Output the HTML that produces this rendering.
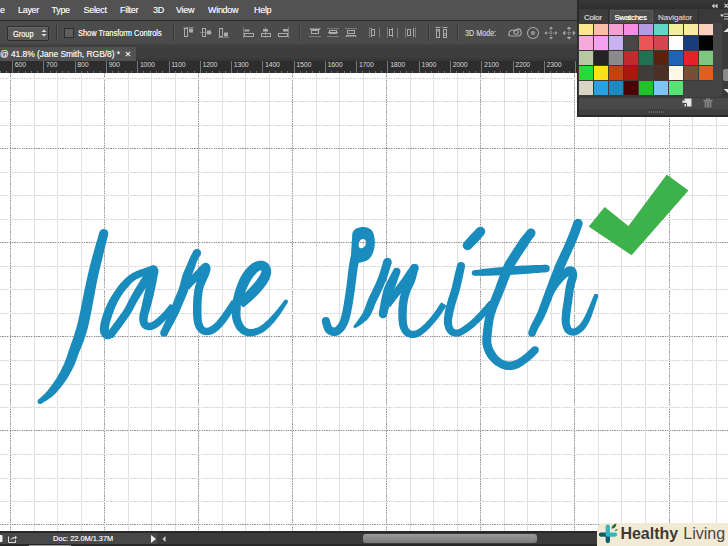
<!DOCTYPE html><html><head><meta charset="utf-8"><style>
*{margin:0;padding:0;box-sizing:border-box}
html,body{width:728px;height:546px;overflow:hidden;background:#fff;font-family:"Liberation Sans",sans-serif}
.a{position:absolute}
.t{position:absolute;white-space:nowrap;line-height:10px}
</style></head><body>
<div class="a" style="left:0;top:73px;width:728px;height:458px;background:#fff;overflow:hidden">
<div class="a" style="left:10.10px;top:0;width:1px;height:458px;background:repeating-linear-gradient(180deg,#969696 0 1.2px,#e2e2e2 1.2px 2.4px)"></div><div class="a" style="left:33.60px;top:0;width:1px;height:458px;background:#e0e0e0"></div><div class="a" style="left:57.10px;top:0;width:1px;height:458px;background:#e0e0e0"></div><div class="a" style="left:80.60px;top:0;width:1px;height:458px;background:#e0e0e0"></div><div class="a" style="left:104.16px;top:0;width:1px;height:458px;background:repeating-linear-gradient(180deg,#969696 0 1.2px,#e2e2e2 1.2px 2.4px)"></div><div class="a" style="left:127.66px;top:0;width:1px;height:458px;background:#e0e0e0"></div><div class="a" style="left:151.16px;top:0;width:1px;height:458px;background:#e0e0e0"></div><div class="a" style="left:174.66px;top:0;width:1px;height:458px;background:#e0e0e0"></div><div class="a" style="left:198.22px;top:0;width:1px;height:458px;background:repeating-linear-gradient(180deg,#969696 0 1.2px,#e2e2e2 1.2px 2.4px)"></div><div class="a" style="left:221.72px;top:0;width:1px;height:458px;background:#e0e0e0"></div><div class="a" style="left:245.22px;top:0;width:1px;height:458px;background:#e0e0e0"></div><div class="a" style="left:268.72px;top:0;width:1px;height:458px;background:#e0e0e0"></div><div class="a" style="left:292.28px;top:0;width:1px;height:458px;background:repeating-linear-gradient(180deg,#969696 0 1.2px,#e2e2e2 1.2px 2.4px)"></div><div class="a" style="left:315.78px;top:0;width:1px;height:458px;background:#e0e0e0"></div><div class="a" style="left:339.28px;top:0;width:1px;height:458px;background:#e0e0e0"></div><div class="a" style="left:362.78px;top:0;width:1px;height:458px;background:#e0e0e0"></div><div class="a" style="left:386.34px;top:0;width:1px;height:458px;background:repeating-linear-gradient(180deg,#969696 0 1.2px,#e2e2e2 1.2px 2.4px)"></div><div class="a" style="left:409.84px;top:0;width:1px;height:458px;background:#e0e0e0"></div><div class="a" style="left:433.34px;top:0;width:1px;height:458px;background:#e0e0e0"></div><div class="a" style="left:456.84px;top:0;width:1px;height:458px;background:#e0e0e0"></div><div class="a" style="left:480.40px;top:0;width:1px;height:458px;background:repeating-linear-gradient(180deg,#969696 0 1.2px,#e2e2e2 1.2px 2.4px)"></div><div class="a" style="left:503.90px;top:0;width:1px;height:458px;background:#e0e0e0"></div><div class="a" style="left:527.40px;top:0;width:1px;height:458px;background:#e0e0e0"></div><div class="a" style="left:550.90px;top:0;width:1px;height:458px;background:#e0e0e0"></div><div class="a" style="left:574.46px;top:0;width:1px;height:458px;background:repeating-linear-gradient(180deg,#969696 0 1.2px,#e2e2e2 1.2px 2.4px)"></div><div class="a" style="left:597.96px;top:0;width:1px;height:458px;background:#e0e0e0"></div><div class="a" style="left:621.46px;top:0;width:1px;height:458px;background:#e0e0e0"></div><div class="a" style="left:644.96px;top:0;width:1px;height:458px;background:#e0e0e0"></div><div class="a" style="left:668.52px;top:0;width:1px;height:458px;background:repeating-linear-gradient(180deg,#969696 0 1.2px,#e2e2e2 1.2px 2.4px)"></div><div class="a" style="left:692.02px;top:0;width:1px;height:458px;background:#e0e0e0"></div><div class="a" style="left:715.52px;top:0;width:1px;height:458px;background:#e0e0e0"></div><div class="a" style="left:0;top:5.25px;width:728px;height:1px;background:repeating-linear-gradient(90deg,#d4d4d4 0 1.2px,#f0f0f0 1.2px 2.4px)"></div><div class="a" style="left:0;top:28.35px;width:728px;height:1px;background:repeating-linear-gradient(90deg,#d4d4d4 0 1.2px,#f0f0f0 1.2px 2.4px)"></div><div class="a" style="left:0;top:51.85px;width:728px;height:1px;background:repeating-linear-gradient(90deg,#d4d4d4 0 1.2px,#f0f0f0 1.2px 2.4px)"></div><div class="a" style="left:0;top:75.10px;width:728px;height:1px;background:repeating-linear-gradient(90deg,#969696 0 1.2px,#e2e2e2 1.2px 2.4px)"></div><div class="a" style="left:0;top:99.30px;width:728px;height:1px;background:repeating-linear-gradient(90deg,#d4d4d4 0 1.2px,#f0f0f0 1.2px 2.4px)"></div><div class="a" style="left:0;top:122.40px;width:728px;height:1px;background:repeating-linear-gradient(90deg,#d4d4d4 0 1.2px,#f0f0f0 1.2px 2.4px)"></div><div class="a" style="left:0;top:145.90px;width:728px;height:1px;background:repeating-linear-gradient(90deg,#d4d4d4 0 1.2px,#f0f0f0 1.2px 2.4px)"></div><div class="a" style="left:0;top:169.15px;width:728px;height:1px;background:repeating-linear-gradient(90deg,#969696 0 1.2px,#e2e2e2 1.2px 2.4px)"></div><div class="a" style="left:0;top:193.35px;width:728px;height:1px;background:repeating-linear-gradient(90deg,#d4d4d4 0 1.2px,#f0f0f0 1.2px 2.4px)"></div><div class="a" style="left:0;top:216.45px;width:728px;height:1px;background:repeating-linear-gradient(90deg,#d4d4d4 0 1.2px,#f0f0f0 1.2px 2.4px)"></div><div class="a" style="left:0;top:239.95px;width:728px;height:1px;background:repeating-linear-gradient(90deg,#d4d4d4 0 1.2px,#f0f0f0 1.2px 2.4px)"></div><div class="a" style="left:0;top:263.20px;width:728px;height:1px;background:repeating-linear-gradient(90deg,#969696 0 1.2px,#e2e2e2 1.2px 2.4px)"></div><div class="a" style="left:0;top:287.40px;width:728px;height:1px;background:repeating-linear-gradient(90deg,#d4d4d4 0 1.2px,#f0f0f0 1.2px 2.4px)"></div><div class="a" style="left:0;top:310.50px;width:728px;height:1px;background:repeating-linear-gradient(90deg,#d4d4d4 0 1.2px,#f0f0f0 1.2px 2.4px)"></div><div class="a" style="left:0;top:334.00px;width:728px;height:1px;background:repeating-linear-gradient(90deg,#d4d4d4 0 1.2px,#f0f0f0 1.2px 2.4px)"></div><div class="a" style="left:0;top:357.25px;width:728px;height:1px;background:repeating-linear-gradient(90deg,#969696 0 1.2px,#e2e2e2 1.2px 2.4px)"></div><div class="a" style="left:0;top:381.45px;width:728px;height:1px;background:repeating-linear-gradient(90deg,#d4d4d4 0 1.2px,#f0f0f0 1.2px 2.4px)"></div><div class="a" style="left:0;top:404.55px;width:728px;height:1px;background:repeating-linear-gradient(90deg,#d4d4d4 0 1.2px,#f0f0f0 1.2px 2.4px)"></div><div class="a" style="left:0;top:428.05px;width:728px;height:1px;background:repeating-linear-gradient(90deg,#d4d4d4 0 1.2px,#f0f0f0 1.2px 2.4px)"></div><div class="a" style="left:0;top:451.30px;width:728px;height:1px;background:repeating-linear-gradient(90deg,#969696 0 1.2px,#e2e2e2 1.2px 2.4px)"></div>
</div>
<svg class="a" style="left:0;top:0" width="728" height="546" viewBox="0 0 728 546"><path fill="#1a8bbd" d="M99.5 232.3 L99.0 233.9 L98.3 236.1 L97.6 238.6 L96.7 241.4 L95.8 244.5 L94.9 247.6 L94.0 250.7 L93.2 253.8 L92.4 256.6 L91.6 259.4 L90.9 262.2 L90.1 265.1 L89.4 268.2 L88.6 271.4 L87.8 275.0 L86.9 278.9 L85.9 283.4 L84.8 288.5 L83.7 293.9 L82.6 299.5 L81.5 305.0 L80.5 310.2 L79.5 314.9 L78.6 318.8 L77.9 322.0 L77.3 324.5 L76.7 326.6 L76.2 328.4 L75.7 330.0 L75.2 331.5 L74.7 333.1 L74.2 334.9 L73.6 336.7 L73.1 338.3 L72.5 339.9 L72.0 341.4 L71.4 343.0 L70.8 344.6 L70.2 346.4 L69.6 348.2 L68.9 350.1 L68.2 352.1 L67.6 354.2 L66.9 356.2 L66.2 358.2 L65.5 360.1 L64.7 362.1 L64.0 363.9 L63.1 365.7 L62.2 367.6 L61.3 369.5 L60.3 371.4 L59.3 373.2 L58.3 375.0 L57.3 376.8 L56.3 378.5 L55.2 380.2 L54.1 381.8 L53.0 383.5 L51.8 385.1 L50.7 386.6 L49.5 388.1 L48.4 389.5 L47.3 390.9 L46.2 392.1 L45.1 393.4 L43.8 394.6 L42.5 395.8 L41.3 396.9 L40.2 398.0 L39.2 398.8 L38.5 399.5 L41.5 403.5 L41.5 403.5 L42.3 403.0 L43.4 402.4 L44.7 401.6 L46.2 400.7 L47.8 399.7 L49.5 398.6 L51.1 397.4 L52.7 396.1 L54.1 394.8 L55.5 393.4 L56.9 391.9 L58.4 390.3 L59.7 388.7 L61.1 387.0 L62.4 385.3 L63.7 383.5 L65.0 381.7 L66.2 379.9 L67.5 378.0 L68.7 376.1 L69.8 374.1 L70.9 372.1 L72.0 370.1 L73.0 368.1 L74.0 366.0 L74.9 363.9 L75.8 361.7 L76.6 359.6 L77.3 357.5 L78.0 355.5 L78.7 353.6 L79.4 351.8 L80.1 350.1 L80.8 348.4 L81.4 346.8 L82.1 345.2 L82.7 343.6 L83.4 341.9 L84.0 340.2 L84.6 338.3 L85.2 336.5 L85.7 334.9 L86.3 333.3 L86.8 331.5 L87.4 329.5 L88.0 327.2 L88.6 324.5 L89.4 321.2 L90.2 317.1 L91.2 312.4 L92.2 307.1 L93.2 301.6 L94.3 296.0 L95.3 290.5 L96.2 285.5 L97.1 281.1 L97.9 277.3 L98.7 273.8 L99.4 270.6 L100.1 267.6 L100.8 264.7 L101.5 261.9 L102.2 259.1 L102.8 256.2 L103.6 253.2 L104.3 250.1 L105.1 247.0 L105.8 243.9 L106.6 241.1 L107.2 238.5 L107.7 236.3 L108.1 234.7Z"/><circle fill="#1a8bbd" cx="103.8" cy="233.5" r="4.50"/><circle fill="#1a8bbd" cx="40.0" cy="401.5" r="2.50"/><path fill="#1a8bbd" d="M152.4 265.4 L151.8 265.6 L151.1 265.8 L150.2 266.2 L149.2 266.5 L148.1 266.9 L147.0 267.3 L145.9 267.7 L144.9 268.0 L143.9 268.4 L142.9 268.7 L141.8 269.1 L140.7 269.4 L139.7 269.8 L138.6 270.2 L137.5 270.6 L136.5 271.1 L135.5 271.5 L134.5 272.0 L133.6 272.5 L132.6 273.0 L131.6 273.6 L130.7 274.2 L129.7 274.8 L128.7 275.5 L127.7 276.3 L126.7 277.2 L125.8 278.0 L124.8 278.9 L123.9 279.8 L123.1 280.7 L122.3 281.5 L121.5 282.3 L120.8 283.1 L120.2 283.8 L119.6 284.5 L119.0 285.2 L118.4 286.0 L117.8 286.8 L117.1 287.7 L116.4 288.8 L115.6 289.9 L114.7 291.2 L113.8 292.6 L112.8 294.0 L111.9 295.5 L111.0 297.0 L110.1 298.6 L109.2 300.0 L108.5 301.5 L107.7 302.9 L107.0 304.4 L106.4 305.8 L105.8 307.2 L105.2 308.6 L104.6 310.1 L104.1 311.5 L103.5 312.9 L103.0 314.4 L102.5 315.9 L102.1 317.4 L101.6 318.9 L101.2 320.4 L100.9 321.8 L100.6 323.1 L100.4 324.3 L100.2 325.4 L100.0 326.5 L99.9 327.6 L99.8 328.7 L99.8 329.7 L99.9 330.8 L100.1 331.8 L100.3 332.9 L100.7 333.9 L101.2 334.9 L101.8 335.8 L102.4 336.7 L103.2 337.5 L104.1 338.2 L105.4 338.9 L107.1 339.3 L108.6 339.2 L109.7 338.9 L110.6 338.6 L111.3 338.3 L111.8 338.0 L112.2 337.9 L112.3 337.8 L109.7 330.2 L109.7 330.2 L109.2 330.4 L108.6 330.6 L108.2 330.8 L107.7 330.9 L107.4 331.0 L107.4 330.9 L107.8 330.9 L108.6 331.1 L109.1 331.3 L109.2 331.3 L109.2 331.3 L109.2 331.2 L109.1 331.0 L109.0 330.7 L109.0 330.4 L108.9 330.2 L108.9 329.8 L108.9 329.4 L108.9 328.9 L108.9 328.3 L109.0 327.6 L109.1 326.8 L109.2 325.9 L109.4 324.9 L109.6 323.9 L110.0 322.7 L110.3 321.4 L110.7 320.1 L111.1 318.7 L111.6 317.3 L112.1 315.9 L112.5 314.5 L113.0 313.2 L113.5 311.9 L114.0 310.5 L114.5 309.2 L115.0 307.9 L115.6 306.6 L116.2 305.3 L116.8 304.0 L117.4 302.6 L118.2 301.2 L119.0 299.8 L119.8 298.3 L120.7 296.9 L121.5 295.6 L122.3 294.4 L123.0 293.2 L123.6 292.3 L124.2 291.5 L124.7 290.9 L125.2 290.3 L125.7 289.7 L126.2 289.1 L126.8 288.4 L127.5 287.7 L128.2 286.9 L128.9 286.0 L129.6 285.2 L130.4 284.3 L131.1 283.5 L131.9 282.7 L132.6 282.1 L133.3 281.5 L134.0 280.9 L134.7 280.4 L135.5 280.0 L136.2 279.5 L137.0 279.1 L137.8 278.7 L138.7 278.3 L139.5 277.9 L140.4 277.5 L141.3 277.2 L142.2 276.8 L143.2 276.4 L144.2 276.1 L145.2 275.8 L146.2 275.5 L147.1 275.2 L148.1 274.9 L149.2 274.7 L150.2 274.4 L151.3 274.2 L152.3 274.0 L153.2 273.9 L154.0 273.7 L154.6 273.6Z"/><circle fill="#1a8bbd" cx="153.5" cy="269.5" r="4.25"/><circle fill="#1a8bbd" cx="111.0" cy="334.0" r="4.00"/><path fill="#1a8bbd" d="M114.2 336.4 L114.6 335.8 L115.2 335.1 L115.8 334.3 L116.6 333.3 L117.4 332.2 L118.3 331.0 L119.2 329.7 L120.2 328.4 L121.3 326.9 L122.5 325.3 L123.8 323.5 L125.2 321.6 L126.6 319.7 L127.9 317.8 L129.2 315.9 L130.4 314.1 L131.4 312.4 L132.4 310.8 L133.2 309.2 L134.0 307.6 L134.8 306.1 L135.5 304.7 L136.2 303.3 L137.0 302.0 L137.8 300.6 L138.6 299.2 L139.4 297.9 L140.3 296.5 L141.1 295.2 L141.9 293.9 L142.8 292.6 L143.6 291.2 L144.5 289.8 L145.4 288.4 L146.3 287.0 L147.1 285.6 L148.0 284.2 L148.9 282.9 L149.7 281.6 L150.5 280.4 L151.3 279.3 L152.1 278.1 L153.0 277.0 L153.8 275.9 L154.6 274.9 L155.3 274.0 L155.9 273.2 L156.4 272.6 L149.6 267.4 L149.6 267.4 L149.2 268.0 L148.6 268.8 L147.9 269.7 L147.1 270.7 L146.2 271.9 L145.3 273.1 L144.4 274.3 L143.5 275.6 L142.6 276.9 L141.7 278.2 L140.8 279.6 L139.9 281.0 L139.0 282.5 L138.1 283.9 L137.2 285.4 L136.4 286.8 L135.6 288.2 L134.7 289.6 L134.0 290.9 L133.2 292.3 L132.4 293.7 L131.6 295.2 L130.8 296.6 L130.0 298.0 L129.2 299.6 L128.4 301.1 L127.7 302.5 L126.9 304.0 L126.2 305.4 L125.4 306.9 L124.5 308.4 L123.6 309.9 L122.6 311.5 L121.4 313.2 L120.1 315.0 L118.7 316.9 L117.4 318.7 L116.1 320.5 L114.9 322.2 L113.8 323.6 L112.8 325.0 L111.9 326.2 L111.0 327.4 L110.2 328.5 L109.5 329.4 L108.8 330.3 L108.2 331.0 L107.8 331.6Z"/><circle fill="#1a8bbd" cx="111.0" cy="334.0" r="4.00"/><circle fill="#1a8bbd" cx="153.0" cy="270.0" r="4.25"/><path fill="#1a8bbd" d="M149.6 270.1 L149.3 271.6 L148.8 273.5 L148.3 275.9 L147.7 278.5 L147.1 281.2 L146.5 284.0 L145.9 286.6 L145.4 289.0 L144.9 291.2 L144.4 293.5 L143.9 295.8 L143.4 298.0 L142.9 300.2 L142.4 302.2 L142.0 304.2 L141.6 305.9 L141.3 307.5 L140.9 308.8 L140.6 310.2 L140.2 311.4 L139.9 312.7 L139.6 313.9 L139.4 315.3 L139.3 316.6 L139.2 317.9 L139.2 319.1 L139.3 320.3 L139.4 321.5 L139.7 322.7 L140.0 323.9 L140.5 325.0 L141.1 326.1 L141.9 327.2 L142.8 328.0 L143.8 328.7 L144.9 329.3 L146.0 329.8 L147.2 330.1 L148.4 330.2 L149.6 330.2 L150.8 330.1 L152.0 329.9 L153.1 329.5 L154.3 329.1 L155.4 328.6 L156.5 328.0 L157.6 327.3 L158.7 326.5 L159.8 325.7 L160.9 324.7 L162.1 323.6 L163.2 322.5 L164.3 321.4 L165.4 320.2 L166.5 319.0 L167.6 317.9 L168.7 316.6 L169.9 315.3 L171.1 313.9 L172.2 312.5 L173.3 311.1 L174.3 309.9 L175.1 309.0 L175.7 308.2 L170.3 303.8 L170.3 303.8 L169.7 304.5 L168.9 305.5 L167.9 306.7 L166.8 308.0 L165.7 309.4 L164.6 310.7 L163.5 312.0 L162.4 313.1 L161.4 314.2 L160.3 315.2 L159.2 316.3 L158.2 317.3 L157.1 318.2 L156.1 319.1 L155.2 319.8 L154.3 320.5 L153.5 321.0 L152.7 321.5 L152.0 321.9 L151.3 322.2 L150.7 322.5 L150.1 322.6 L149.7 322.7 L149.4 322.8 L149.1 322.7 L148.8 322.7 L148.6 322.6 L148.4 322.4 L148.2 322.3 L148.0 322.1 L147.9 322.0 L147.9 321.9 L147.8 321.7 L147.8 321.4 L147.7 321.0 L147.6 320.4 L147.6 319.8 L147.6 319.0 L147.6 318.2 L147.7 317.4 L147.9 316.6 L148.1 315.8 L148.3 314.9 L148.6 313.8 L149.0 312.6 L149.5 311.3 L149.9 309.8 L150.4 308.1 L150.8 306.3 L151.3 304.4 L151.9 302.3 L152.4 300.1 L153.0 297.9 L153.6 295.6 L154.1 293.3 L154.6 291.0 L155.2 288.6 L155.7 285.9 L156.3 283.1 L156.8 280.4 L157.3 277.8 L157.7 275.4 L158.1 273.4 L158.4 271.9Z"/><circle fill="#1a8bbd" cx="154.0" cy="271.0" r="4.50"/><path fill="#1a8bbd" d="M193.5 251.0 L193.3 251.4 L193.0 251.9 L192.6 252.6 L192.2 253.3 L191.7 254.2 L191.2 255.1 L190.7 256.1 L190.2 257.1 L189.7 258.2 L189.2 259.3 L188.7 260.4 L188.2 261.6 L187.7 262.8 L187.3 263.9 L186.8 265.1 L186.3 266.1 L185.9 267.2 L185.5 268.1 L185.0 269.2 L184.5 270.2 L184.0 271.3 L183.5 272.5 L183.0 273.8 L182.5 275.3 L182.0 276.8 L181.6 278.5 L181.1 280.1 L180.7 281.8 L180.3 283.4 L179.9 285.0 L179.4 286.5 L179.0 287.9 L178.5 289.3 L178.0 290.7 L177.4 292.0 L176.9 293.4 L176.3 294.8 L175.6 296.2 L175.0 297.7 L174.4 299.2 L173.8 300.7 L173.2 302.2 L172.7 303.7 L172.1 305.1 L171.5 306.6 L170.9 308.1 L170.3 309.6 L169.7 311.1 L169.0 312.7 L168.3 314.4 L167.5 316.2 L166.7 317.9 L166.0 319.7 L165.2 321.3 L164.5 322.9 L163.9 324.2 L163.4 325.5 L162.8 326.6 L162.4 327.6 L161.9 328.6 L161.5 329.4 L161.2 330.2 L160.9 330.8 L160.6 331.3 L167.4 334.7 L167.4 334.7 L167.6 334.2 L167.9 333.6 L168.3 332.9 L168.8 332.0 L169.3 331.1 L169.9 330.1 L170.5 329.0 L171.1 327.8 L171.8 326.4 L172.6 325.0 L173.5 323.4 L174.4 321.7 L175.3 320.0 L176.2 318.2 L177.1 316.5 L177.9 314.9 L178.7 313.3 L179.4 311.7 L180.1 310.2 L180.7 308.7 L181.3 307.2 L182.0 305.7 L182.6 304.3 L183.2 302.8 L183.8 301.4 L184.4 300.0 L185.0 298.6 L185.7 297.1 L186.3 295.6 L186.9 294.1 L187.5 292.5 L188.0 290.9 L188.5 289.1 L189.0 287.4 L189.4 285.6 L189.7 283.9 L190.1 282.2 L190.4 280.7 L190.8 279.2 L191.1 277.9 L191.5 276.8 L191.8 275.7 L192.2 274.6 L192.6 273.6 L193.0 272.6 L193.4 271.5 L193.8 270.4 L194.3 269.3 L194.7 268.1 L195.1 266.9 L195.5 265.7 L195.9 264.5 L196.3 263.4 L196.7 262.3 L197.1 261.3 L197.4 260.5 L197.8 259.7 L198.2 258.9 L198.6 258.1 L199.1 257.3 L199.5 256.6 L199.9 256.0 L200.2 255.4 L200.5 255.0Z"/><circle fill="#1a8bbd" cx="197.0" cy="253.0" r="4.00"/><circle fill="#1a8bbd" cx="164.0" cy="333.0" r="3.75"/><path fill="#1a8bbd" d="M189.0 289.6 L189.3 289.3 L189.7 288.8 L190.2 288.3 L190.8 287.6 L191.3 287.0 L191.9 286.4 L192.4 285.8 L192.9 285.2 L193.4 284.8 L193.8 284.3 L194.3 283.8 L194.7 283.4 L195.2 282.9 L195.7 282.4 L196.3 281.9 L196.8 281.3 L197.4 280.8 L198.0 280.2 L198.7 279.5 L199.3 278.9 L200.0 278.2 L200.6 277.6 L201.3 276.9 L201.9 276.2 L202.5 275.6 L203.1 274.9 L203.7 274.3 L204.2 273.7 L204.7 273.1 L205.1 272.6 L205.5 272.2 L205.8 271.8 L206.2 271.4 L206.6 271.1 L206.9 270.8 L207.2 270.5 L207.3 270.4 L207.3 270.4 L206.9 270.6 L205.8 270.8 L204.2 270.4 L203.2 269.6 L202.7 269.0 L202.6 268.6 L202.6 268.4 L202.6 268.4 L202.5 268.4 L202.5 268.5 L202.5 268.6 L202.4 268.9 L202.3 269.2 L202.1 269.7 L201.8 270.2 L201.6 270.7 L201.3 271.3 L201.1 271.9 L200.8 272.5 L200.6 273.0 L200.3 273.7 L200.0 274.3 L199.6 275.0 L199.3 275.8 L198.9 276.5 L198.6 277.3 L198.3 278.0 L198.0 278.7 L197.6 279.5 L197.3 280.3 L196.9 281.1 L196.6 281.9 L196.3 282.8 L196.0 283.6 L195.7 284.4 L195.5 285.2 L195.2 286.0 L195.0 286.8 L194.8 287.6 L194.7 288.4 L194.5 289.3 L194.3 290.3 L194.1 291.3 L194.0 292.3 L193.8 293.4 L193.7 294.5 L193.6 295.7 L193.4 297.0 L193.3 298.3 L193.3 299.8 L193.2 301.3 L193.1 303.0 L193.0 304.7 L193.0 306.6 L193.0 308.4 L193.0 310.2 L193.0 312.0 L193.1 313.6 L193.1 315.2 L193.2 316.6 L193.3 318.1 L193.5 319.6 L193.7 321.0 L193.9 322.4 L194.3 323.9 L194.7 325.2 L195.2 326.5 L195.7 327.7 L196.4 328.9 L197.1 330.0 L197.9 331.1 L198.9 332.1 L200.0 333.1 L201.2 333.8 L202.5 334.4 L203.8 334.8 L205.1 335.0 L206.5 335.2 L208.0 335.1 L209.5 334.9 L211.1 334.5 L212.6 333.9 L213.9 333.2 L215.3 332.4 L216.7 331.5 L218.0 330.4 L219.4 329.2 L220.9 327.8 L222.3 326.2 L223.9 324.4 L225.6 322.2 L227.6 319.5 L229.7 316.6 L231.7 313.6 L233.7 310.6 L235.5 307.9 L237.0 305.7 L238.1 304.1 L231.9 299.9 L231.9 299.9 L230.8 301.5 L229.3 303.8 L227.5 306.4 L225.5 309.4 L223.5 312.3 L221.5 315.2 L219.7 317.6 L218.1 319.6 L216.8 321.2 L215.5 322.5 L214.3 323.7 L213.2 324.6 L212.2 325.4 L211.2 326.1 L210.3 326.6 L209.4 327.1 L208.7 327.4 L208.0 327.6 L207.4 327.7 L206.8 327.7 L206.2 327.7 L205.7 327.5 L205.2 327.4 L204.8 327.2 L204.5 327.0 L204.2 326.7 L203.9 326.3 L203.5 325.8 L203.2 325.1 L202.9 324.4 L202.6 323.6 L202.3 322.8 L202.1 321.9 L201.9 321.0 L201.8 320.0 L201.7 318.8 L201.7 317.6 L201.6 316.2 L201.6 314.8 L201.5 313.4 L201.5 311.8 L201.5 310.2 L201.5 308.5 L201.5 306.7 L201.6 305.0 L201.6 303.3 L201.7 301.7 L201.7 300.2 L201.8 298.9 L201.9 297.7 L202.0 296.6 L202.1 295.5 L202.3 294.5 L202.4 293.5 L202.5 292.6 L202.7 291.7 L202.8 290.9 L203.0 290.1 L203.1 289.5 L203.3 288.9 L203.4 288.3 L203.6 287.7 L203.8 287.0 L204.0 286.4 L204.3 285.7 L204.5 285.0 L204.8 284.4 L205.1 283.7 L205.4 282.9 L205.7 282.2 L206.1 281.4 L206.4 280.7 L206.7 280.0 L207.0 279.4 L207.3 278.7 L207.7 278.0 L208.0 277.3 L208.3 276.5 L208.7 275.8 L208.9 275.1 L209.2 274.4 L209.4 273.8 L209.6 273.1 L209.8 272.4 L210.0 271.7 L210.2 271.0 L210.4 270.3 L210.5 269.5 L210.5 268.7 L210.5 268.0 L210.4 267.2 L210.2 266.4 L209.9 265.4 L209.2 264.4 L207.8 263.3 L205.8 262.8 L204.2 263.1 L203.3 263.5 L202.6 264.0 L202.0 264.4 L201.5 264.9 L201.1 265.3 L200.6 265.7 L200.2 266.2 L199.6 266.7 L199.1 267.3 L198.6 267.9 L198.1 268.5 L197.6 269.1 L197.1 269.7 L196.6 270.2 L196.1 270.8 L195.5 271.3 L195.0 271.9 L194.3 272.5 L193.7 273.2 L193.0 273.8 L192.4 274.5 L191.8 275.1 L191.2 275.7 L190.6 276.2 L190.1 276.7 L189.6 277.2 L189.1 277.7 L188.6 278.2 L188.1 278.7 L187.6 279.2 L187.1 279.8 L186.5 280.4 L185.9 281.0 L185.3 281.7 L184.7 282.4 L184.2 283.0 L183.7 283.5 L183.3 284.0 L183.0 284.4Z"/><path fill="#1a8bbd" d="M241.6 304.2 L241.8 303.3 L242.2 302.2 L242.5 300.9 L242.9 299.4 L243.4 297.9 L243.8 296.4 L244.3 294.9 L244.7 293.6 L245.2 292.3 L245.8 290.9 L246.3 289.6 L246.9 288.3 L247.4 287.0 L248.0 285.7 L248.6 284.5 L249.2 283.4 L249.8 282.3 L250.4 281.3 L251.0 280.3 L251.6 279.3 L252.2 278.3 L252.8 277.5 L253.4 276.6 L254.1 275.8 L254.7 275.1 L255.3 274.4 L255.9 273.7 L256.5 273.1 L257.0 272.5 L257.6 272.0 L258.1 271.6 L258.5 271.3 L258.9 271.1 L259.4 270.8 L259.8 270.6 L260.3 270.5 L260.7 270.4 L261.1 270.3 L261.4 270.2 L261.5 270.2 L261.5 270.2 L261.4 270.2 L261.3 270.1 L261.3 270.1 L261.3 270.1 L261.3 270.1 L261.3 270.1 L261.3 270.2 L261.3 270.3 L261.4 270.5 L261.4 270.7 L261.4 271.0 L261.4 271.3 L261.3 271.6 L261.3 271.9 L261.2 272.3 L261.0 272.8 L260.7 273.4 L260.3 274.2 L259.9 275.0 L259.4 275.9 L258.8 276.8 L258.2 277.7 L257.6 278.6 L257.0 279.5 L256.3 280.4 L255.5 281.4 L254.7 282.4 L253.8 283.4 L252.9 284.4 L252.0 285.4 L251.1 286.5 L250.2 287.5 L249.3 288.5 L248.3 289.5 L247.4 290.5 L246.4 291.5 L245.4 292.5 L244.5 293.4 L243.6 294.3 L242.7 295.2 L241.8 296.1 L240.8 296.9 L239.9 297.8 L239.0 298.6 L238.2 299.3 L237.5 299.9 L236.9 300.4 L243.1 307.6 L243.1 307.6 L243.6 307.2 L244.3 306.7 L245.2 306.0 L246.1 305.2 L247.2 304.4 L248.3 303.5 L249.3 302.6 L250.4 301.7 L251.4 300.8 L252.5 299.8 L253.5 298.8 L254.6 297.8 L255.7 296.8 L256.8 295.7 L257.9 294.6 L258.9 293.5 L259.9 292.5 L260.8 291.4 L261.8 290.3 L262.8 289.1 L263.7 288.0 L264.7 286.8 L265.5 285.6 L266.4 284.4 L267.1 283.2 L267.8 282.1 L268.5 280.8 L269.1 279.6 L269.6 278.4 L270.1 277.2 L270.5 276.0 L270.8 274.7 L271.1 273.5 L271.2 272.2 L271.2 271.0 L271.0 269.8 L270.8 268.7 L270.5 267.7 L270.2 266.8 L269.7 265.8 L269.2 264.9 L268.5 264.0 L267.8 263.2 L266.9 262.5 L265.9 261.9 L264.8 261.4 L263.7 261.0 L262.5 260.8 L261.4 260.7 L260.3 260.7 L259.1 260.8 L258.0 261.0 L256.9 261.3 L255.8 261.7 L254.6 262.1 L253.5 262.7 L252.4 263.3 L251.4 264.0 L250.4 264.7 L249.5 265.5 L248.5 266.4 L247.7 267.3 L246.8 268.2 L245.9 269.2 L245.1 270.2 L244.3 271.3 L243.5 272.4 L242.7 273.5 L242.0 274.7 L241.2 276.0 L240.5 277.3 L239.8 278.6 L239.2 280.0 L238.5 281.4 L237.9 282.9 L237.3 284.4 L236.8 285.9 L236.2 287.4 L235.7 288.9 L235.3 290.4 L234.8 292.0 L234.3 293.7 L233.9 295.3 L233.5 297.0 L233.2 298.5 L232.9 299.9 L232.6 301.0 L232.4 301.8Z"/><path fill="#1a8bbd" d="M232.8 299.7 L232.7 300.3 L232.7 301.1 L232.6 302.0 L232.5 303.1 L232.4 304.2 L232.4 305.4 L232.3 306.7 L232.3 307.8 L232.2 308.9 L232.1 310.1 L232.0 311.4 L232.0 312.7 L231.9 314.2 L231.9 315.7 L232.1 317.3 L232.3 318.8 L232.7 320.3 L233.1 321.7 L233.6 323.2 L234.2 324.6 L234.9 326.0 L235.6 327.4 L236.4 328.7 L237.3 330.0 L238.3 331.1 L239.4 332.1 L240.5 333.0 L241.7 333.9 L243.0 334.6 L244.3 335.3 L245.8 335.8 L247.3 336.2 L248.8 336.4 L250.4 336.4 L252.0 336.3 L253.5 336.0 L255.0 335.7 L256.5 335.3 L257.9 334.8 L259.3 334.3 L260.6 333.6 L261.9 333.0 L263.2 332.2 L264.4 331.4 L265.6 330.5 L266.8 329.6 L268.0 328.5 L269.2 327.4 L270.4 326.2 L271.7 324.8 L273.0 323.4 L274.3 321.9 L275.5 320.4 L276.8 318.8 L278.0 317.3 L279.1 315.7 L280.4 314.0 L281.6 312.2 L282.8 310.3 L284.0 308.4 L285.2 306.6 L286.2 305.0 L287.0 303.7 L287.6 302.7 L284.4 300.3 L284.4 300.3 L283.6 301.3 L282.6 302.6 L281.5 304.1 L280.2 305.7 L278.8 307.4 L277.5 309.2 L276.1 310.8 L274.9 312.3 L273.6 313.7 L272.3 315.1 L271.0 316.5 L269.7 317.9 L268.5 319.2 L267.2 320.4 L266.0 321.6 L264.8 322.6 L263.7 323.5 L262.6 324.4 L261.6 325.1 L260.6 325.8 L259.6 326.4 L258.7 326.9 L257.7 327.4 L256.7 327.7 L255.6 328.1 L254.5 328.4 L253.4 328.7 L252.3 328.9 L251.3 329.0 L250.3 329.0 L249.4 328.9 L248.7 328.8 L248.1 328.6 L247.4 328.3 L246.7 328.0 L246.1 327.5 L245.4 327.0 L244.8 326.4 L244.2 325.7 L243.7 325.0 L243.2 324.3 L242.7 323.5 L242.3 322.5 L241.9 321.5 L241.5 320.4 L241.2 319.3 L240.9 318.2 L240.7 317.2 L240.5 316.3 L240.5 315.3 L240.5 314.2 L240.5 313.1 L240.5 311.9 L240.6 310.6 L240.7 309.4 L240.7 308.2 L240.8 307.0 L240.8 305.9 L240.9 304.8 L241.0 303.7 L241.1 302.6 L241.1 301.7 L241.2 300.9 L241.2 300.3Z"/><circle fill="#1a8bbd" cx="286.0" cy="301.5" r="2.00"/><path fill="#1a8bbd" d="M351.4 253.9 L351.2 254.6 L351.0 255.6 L350.7 256.7 L350.4 258.1 L350.0 259.7 L349.7 261.5 L349.3 263.5 L349.0 265.7 L348.6 268.1 L348.3 270.8 L347.9 273.6 L347.6 276.7 L347.2 279.8 L346.8 282.9 L346.5 285.9 L346.0 288.9 L345.6 291.9 L345.1 295.0 L344.7 298.2 L344.2 301.3 L343.7 304.4 L343.2 307.2 L342.7 309.9 L342.2 312.2 L341.8 314.2 L341.3 315.9 L340.9 317.4 L340.6 318.8 L340.2 319.9 L339.8 320.9 L339.3 321.9 L338.8 322.9 L338.3 323.8 L337.7 324.7 L337.0 325.5 L336.4 326.1 L335.8 326.7 L335.3 327.1 L334.9 327.4 L334.7 327.5 L334.5 327.5 L334.3 327.5 L333.9 327.5 L333.5 327.3 L333.1 327.2 L332.7 327.0 L332.3 326.7 L332.1 326.6 L332.0 326.5 L331.7 325.9 L331.3 325.0 L330.9 323.9 L330.5 322.8 L330.2 321.6 L329.9 320.6 L329.6 319.8 L322.0 322.2 L322.0 322.2 L322.2 322.8 L322.4 323.7 L322.7 324.9 L323.0 326.3 L323.5 327.8 L324.0 329.3 L324.8 330.9 L325.9 332.4 L327.1 333.5 L328.3 334.3 L329.7 335.0 L331.1 335.5 L332.6 335.9 L334.1 336.0 L335.7 335.9 L337.3 335.5 L338.8 334.9 L340.2 334.1 L341.4 333.1 L342.5 332.1 L343.5 330.9 L344.5 329.7 L345.4 328.4 L346.2 327.1 L346.9 325.8 L347.6 324.4 L348.2 323.0 L348.8 321.5 L349.3 319.9 L349.8 318.1 L350.3 316.2 L350.8 314.0 L351.3 311.6 L351.8 308.8 L352.4 305.8 L352.9 302.7 L353.4 299.5 L353.8 296.3 L354.3 293.2 L354.8 290.1 L355.2 287.1 L355.6 284.0 L356.0 280.8 L356.4 277.7 L356.8 274.7 L357.1 271.9 L357.5 269.4 L357.8 267.1 L358.2 265.2 L358.6 263.4 L359.0 261.8 L359.4 260.4 L359.7 259.1 L360.1 258.0 L360.4 257.0 L360.6 256.1Z"/><circle fill="#1a8bbd" cx="325.8" cy="321.0" r="4.00"/><path fill="#1a8bbd" d="M356.0 327.6 L356.5 327.3 L357.2 326.9 L358.1 326.4 L359.1 325.9 L360.1 325.2 L361.2 324.6 L362.2 323.8 L363.2 323.0 L364.1 322.3 L365.0 321.6 L365.9 320.7 L366.8 319.9 L367.8 318.9 L368.7 317.8 L369.6 316.6 L370.5 315.2 L371.3 313.7 L372.1 312.1 L372.8 310.5 L373.5 308.9 L374.1 307.2 L374.7 305.6 L375.3 304.1 L375.9 302.7 L376.5 301.3 L377.2 299.9 L377.9 298.5 L378.6 297.1 L379.3 295.7 L380.0 294.2 L380.7 292.8 L381.4 291.3 L382.0 289.9 L382.6 288.5 L383.3 287.2 L383.9 285.8 L384.5 284.3 L385.2 282.8 L385.8 281.2 L386.5 279.4 L387.2 277.5 L387.9 275.2 L388.7 272.9 L389.4 270.5 L390.1 268.2 L390.7 266.2 L391.2 264.5 L391.6 263.2 L383.4 260.8 L383.4 260.8 L383.0 262.0 L382.5 263.8 L381.9 265.8 L381.2 268.0 L380.5 270.4 L379.8 272.6 L379.1 274.7 L378.5 276.6 L377.9 278.1 L377.3 279.6 L376.7 281.0 L376.2 282.3 L375.6 283.6 L374.9 284.9 L374.3 286.3 L373.6 287.7 L373.0 289.1 L372.3 290.5 L371.6 291.9 L370.9 293.3 L370.2 294.8 L369.5 296.2 L368.8 297.7 L368.1 299.3 L367.4 300.9 L366.8 302.6 L366.2 304.3 L365.6 305.9 L365.0 307.5 L364.5 308.9 L364.0 310.2 L363.5 311.4 L363.0 312.4 L362.4 313.4 L361.9 314.4 L361.3 315.3 L360.7 316.2 L360.1 317.1 L359.4 318.0 L358.8 319.0 L358.2 319.8 L357.6 320.8 L356.9 321.7 L356.2 322.6 L355.5 323.4 L354.9 324.2 L354.4 324.9 L354.0 325.4Z"/><circle fill="#1a8bbd" cx="355.0" cy="326.5" r="1.50"/><circle fill="#1a8bbd" cx="387.5" cy="262.0" r="4.25"/><path fill="#1a8bbd" d="M393.3 270.0 L392.9 270.6 L392.5 271.5 L391.9 272.4 L391.3 273.5 L390.7 274.7 L390.1 275.9 L389.5 277.1 L388.9 278.2 L388.3 279.2 L387.8 280.3 L387.2 281.4 L386.6 282.5 L386.0 283.7 L385.4 285.0 L384.8 286.3 L384.3 287.6 L383.8 289.0 L383.4 290.3 L383.0 291.7 L382.7 293.0 L382.3 294.4 L382.0 295.9 L381.7 297.3 L381.4 298.9 L381.0 300.6 L380.7 302.6 L380.3 304.7 L379.9 306.8 L379.6 308.7 L379.3 310.5 L379.0 312.0 L378.8 313.1 L387.2 314.9 L387.2 314.9 L387.4 313.8 L387.8 312.3 L388.2 310.5 L388.7 308.6 L389.2 306.6 L389.7 304.6 L390.2 302.7 L390.6 301.1 L391.0 299.6 L391.4 298.3 L391.8 296.9 L392.2 295.7 L392.6 294.5 L393.0 293.3 L393.3 292.1 L393.7 291.0 L394.1 289.8 L394.5 288.7 L394.9 287.6 L395.3 286.5 L395.8 285.3 L396.2 284.2 L396.7 283.0 L397.1 281.8 L397.6 280.6 L398.0 279.3 L398.4 278.1 L398.9 276.8 L399.3 275.6 L399.6 274.6 L399.9 273.7 L400.1 273.0Z"/><circle fill="#1a8bbd" cx="396.7" cy="271.5" r="3.75"/><circle fill="#1a8bbd" cx="383.0" cy="314.0" r="4.25"/><path fill="#1a8bbd" d="M390.3 307.3 L390.7 306.8 L391.1 306.1 L391.7 305.2 L392.3 304.3 L393.0 303.4 L393.7 302.4 L394.5 301.4 L395.2 300.4 L395.9 299.5 L396.7 298.5 L397.6 297.4 L398.5 296.3 L399.4 295.2 L400.3 294.1 L401.2 292.9 L402.2 291.8 L403.1 290.6 L404.0 289.4 L404.9 288.2 L405.8 287.0 L406.7 285.8 L407.6 284.6 L408.5 283.4 L409.3 282.3 L410.0 281.2 L410.8 280.1 L411.4 279.1 L412.1 278.1 L412.7 277.2 L413.2 276.3 L413.8 275.5 L414.3 274.8 L414.8 274.1 L415.2 273.5 L415.7 272.9 L416.2 272.3 L416.6 271.7 L417.0 271.3 L417.4 270.8 L417.6 270.5 L411.4 265.5 L411.4 265.5 L411.1 265.8 L410.8 266.2 L410.4 266.7 L409.9 267.3 L409.4 267.9 L408.9 268.6 L408.3 269.4 L407.7 270.2 L407.1 271.0 L406.6 271.9 L406.0 272.8 L405.4 273.8 L404.7 274.7 L404.1 275.7 L403.4 276.7 L402.7 277.7 L402.0 278.7 L401.2 279.8 L400.3 281.0 L399.4 282.2 L398.5 283.4 L397.6 284.5 L396.7 285.7 L395.8 286.8 L395.0 287.9 L394.1 289.0 L393.2 290.1 L392.3 291.3 L391.4 292.4 L390.5 293.4 L389.6 294.5 L388.8 295.6 L388.0 296.6 L387.3 297.7 L386.5 298.7 L385.8 299.7 L385.1 300.7 L384.6 301.5 L384.1 302.2 L383.7 302.7Z"/><circle fill="#1a8bbd" cx="414.5" cy="268.0" r="4.00"/><path fill="#1a8bbd" d="M410.6 266.9 L410.4 267.9 L410.0 269.2 L409.5 270.6 L409.1 272.3 L408.5 274.0 L408.0 275.6 L407.5 277.2 L407.0 278.5 L406.5 279.7 L406.0 280.8 L405.5 281.9 L404.9 283.1 L404.2 284.4 L403.6 285.7 L403.0 287.1 L402.4 288.5 L401.9 290.0 L401.5 291.4 L401.0 292.8 L400.6 294.3 L400.2 295.7 L399.9 297.2 L399.6 298.7 L399.3 300.3 L399.1 301.9 L398.8 303.5 L398.7 305.1 L398.5 306.8 L398.4 308.4 L398.3 310.1 L398.3 311.7 L398.3 313.4 L398.3 315.0 L398.3 316.8 L398.4 318.5 L398.5 320.3 L398.7 322.1 L398.9 323.8 L399.2 325.5 L399.6 327.0 L400.1 328.5 L400.7 329.8 L401.3 331.1 L402.0 332.3 L402.9 333.4 L403.8 334.5 L404.8 335.4 L406.0 336.2 L407.2 336.8 L408.5 337.3 L409.8 337.7 L411.2 337.9 L412.7 338.0 L414.1 337.9 L415.5 337.7 L417.0 337.4 L418.4 336.8 L419.7 336.2 L421.0 335.4 L422.3 334.5 L423.5 333.6 L424.7 332.6 L426.0 331.5 L427.2 330.4 L428.4 329.2 L429.8 327.9 L431.1 326.5 L432.4 325.1 L433.7 323.6 L435.0 322.1 L436.3 320.6 L437.6 319.0 L438.8 317.3 L440.2 315.5 L441.5 313.5 L442.8 311.6 L444.0 309.8 L445.1 308.2 L446.0 306.8 L446.7 305.8 L441.3 302.2 L441.3 302.2 L440.6 303.2 L439.7 304.6 L438.6 306.2 L437.4 308.0 L436.2 309.9 L434.9 311.7 L433.6 313.4 L432.4 315.0 L431.3 316.5 L430.1 317.9 L428.8 319.4 L427.6 320.8 L426.4 322.1 L425.2 323.4 L424.0 324.5 L422.8 325.6 L421.7 326.6 L420.6 327.5 L419.5 328.3 L418.5 329.0 L417.5 329.6 L416.6 330.1 L415.7 330.4 L415.0 330.6 L414.3 330.8 L413.6 330.8 L412.9 330.8 L412.2 330.7 L411.6 330.6 L411.0 330.4 L410.4 330.1 L410.0 329.8 L409.7 329.5 L409.3 329.2 L408.9 328.7 L408.6 328.1 L408.2 327.5 L407.9 326.7 L407.6 325.9 L407.4 325.0 L407.2 323.9 L407.0 322.7 L406.9 321.3 L406.8 319.8 L406.7 318.2 L406.7 316.6 L406.7 315.0 L406.7 313.4 L406.8 311.9 L406.8 310.4 L406.9 308.9 L407.0 307.4 L407.1 306.0 L407.3 304.5 L407.5 303.1 L407.7 301.7 L407.9 300.4 L408.2 299.0 L408.5 297.7 L408.8 296.4 L409.2 295.2 L409.6 293.9 L410.0 292.7 L410.4 291.5 L410.8 290.4 L411.3 289.3 L411.9 288.2 L412.5 287.0 L413.1 285.8 L413.7 284.4 L414.4 283.0 L415.0 281.5 L415.5 279.8 L416.1 278.1 L416.5 276.3 L417.0 274.5 L417.4 272.8 L417.8 271.3 L418.1 270.0 L418.4 269.1Z"/><circle fill="#1a8bbd" cx="414.5" cy="268.0" r="4.00"/><path fill="#1a8bbd" d="M457.1 265.1 L456.9 265.9 L456.6 267.0 L456.3 268.3 L455.9 269.8 L455.5 271.3 L455.1 272.9 L454.7 274.5 L454.4 276.1 L454.0 277.6 L453.6 279.2 L453.3 280.8 L452.9 282.4 L452.5 284.1 L452.2 285.7 L451.8 287.2 L451.4 288.7 L451.0 290.1 L450.6 291.4 L450.2 292.8 L449.7 294.1 L449.3 295.5 L448.8 296.9 L448.3 298.3 L447.9 299.8 L447.5 301.3 L447.1 302.9 L446.6 304.4 L446.2 306.0 L445.8 307.6 L445.4 309.2 L445.1 310.7 L444.8 312.2 L444.6 313.6 L444.4 315.0 L444.2 316.4 L444.0 317.7 L443.9 319.1 L443.9 320.6 L443.9 322.0 L444.0 323.4 L444.2 324.8 L444.5 326.1 L444.9 327.5 L445.3 328.8 L445.9 330.1 L446.6 331.3 L447.4 332.5 L448.3 333.6 L449.4 334.5 L450.6 335.3 L451.8 335.8 L453.1 336.3 L454.5 336.6 L455.8 336.7 L457.2 336.6 L458.7 336.4 L460.1 336.0 L461.5 335.5 L462.9 334.8 L464.2 334.1 L465.4 333.3 L466.7 332.5 L467.9 331.7 L469.0 330.9 L470.2 330.0 L471.4 329.1 L472.6 328.2 L473.8 327.2 L474.9 326.2 L476.1 325.2 L477.2 324.1 L478.4 323.0 L479.6 321.9 L480.8 320.7 L482.0 319.4 L483.2 318.2 L484.3 316.9 L485.5 315.7 L486.6 314.5 L487.6 313.4 L488.6 312.2 L489.7 311.0 L490.7 309.8 L491.7 308.7 L492.6 307.6 L493.4 306.7 L494.1 305.9 L494.6 305.3 L489.4 300.7 L489.4 300.7 L488.8 301.3 L488.1 302.1 L487.3 303.1 L486.4 304.1 L485.4 305.2 L484.4 306.4 L483.4 307.5 L482.4 308.6 L481.4 309.8 L480.3 311.0 L479.2 312.2 L478.1 313.4 L476.9 314.6 L475.8 315.8 L474.7 316.9 L473.6 318.0 L472.5 319.0 L471.4 320.0 L470.3 320.9 L469.2 321.9 L468.2 322.7 L467.1 323.6 L466.1 324.4 L465.0 325.1 L463.9 325.9 L462.7 326.7 L461.6 327.4 L460.6 328.1 L459.6 328.7 L458.7 329.1 L457.9 329.4 L457.3 329.6 L456.8 329.6 L456.2 329.6 L455.6 329.5 L455.1 329.3 L454.7 329.1 L454.3 328.9 L453.9 328.6 L453.7 328.4 L453.5 328.1 L453.2 327.6 L452.9 327.0 L452.7 326.2 L452.4 325.4 L452.2 324.4 L452.1 323.5 L452.0 322.6 L452.0 321.7 L452.0 320.8 L452.1 319.8 L452.2 318.8 L452.4 317.6 L452.7 316.4 L452.9 315.1 L453.2 313.8 L453.4 312.5 L453.8 311.1 L454.1 309.6 L454.5 308.1 L454.9 306.6 L455.3 305.1 L455.7 303.6 L456.1 302.2 L456.5 300.8 L456.9 299.5 L457.3 298.1 L457.8 296.8 L458.2 295.4 L458.7 294.0 L459.2 292.5 L459.6 290.9 L460.0 289.3 L460.4 287.7 L460.8 286.0 L461.2 284.3 L461.6 282.7 L462.0 281.0 L462.3 279.5 L462.6 277.9 L463.0 276.4 L463.3 274.8 L463.6 273.2 L464.0 271.6 L464.3 270.1 L464.5 268.8 L464.7 267.7 L464.9 266.9Z"/><circle fill="#1a8bbd" cx="461.0" cy="266.0" r="4.00"/><path fill="#1a8bbd" d="M471.0 248.7 L471.5 248.2 L472.2 247.5 L473.0 246.7 L473.9 245.8 L474.9 244.8 L475.9 243.8 L476.8 242.8 L477.7 241.9 L478.5 241.0 L479.4 240.0 L480.3 238.9 L481.2 237.9 L482.1 236.9 L482.9 236.0 L483.5 235.3 L484.0 234.7 L477.0 228.3 L477.0 228.3 L476.5 228.8 L475.8 229.5 L475.0 230.3 L474.1 231.2 L473.1 232.2 L472.1 233.2 L471.2 234.2 L470.3 235.1 L469.5 236.0 L468.6 237.0 L467.7 238.1 L466.8 239.1 L465.9 240.1 L465.1 241.0 L464.5 241.7 L464.0 242.3Z"/><circle fill="#1a8bbd" cx="467.5" cy="245.5" r="4.75"/><circle fill="#1a8bbd" cx="480.5" cy="231.5" r="4.75"/><path fill="#1a8bbd" d="M527.5 230.2 L527.2 230.5 L526.8 231.0 L526.2 231.6 L525.6 232.3 L525.0 233.0 L524.4 233.7 L523.8 234.5 L523.2 235.2 L522.7 235.8 L522.3 236.3 L521.9 236.8 L521.5 237.3 L521.1 237.8 L520.6 238.5 L520.0 239.3 L519.3 240.3 L518.5 241.6 L517.5 243.1 L516.4 244.7 L515.2 246.5 L514.0 248.3 L512.8 250.2 L511.6 252.0 L510.6 253.6 L509.7 255.1 L508.8 256.4 L508.0 257.7 L507.1 259.0 L506.2 260.4 L505.3 262.0 L504.4 263.9 L503.4 265.9 L502.4 268.3 L501.4 270.8 L500.4 273.5 L499.4 276.3 L498.3 279.2 L497.3 282.1 L496.2 285.0 L495.2 287.9 L494.1 290.7 L492.9 293.6 L491.7 296.7 L490.5 299.7 L489.3 302.9 L488.1 306.0 L487.1 309.2 L486.2 312.3 L485.4 315.5 L484.7 318.8 L484.2 322.1 L483.7 325.3 L483.3 328.4 L483.0 331.2 L482.7 333.8 L482.5 336.1 L482.4 338.0 L482.3 339.7 L482.3 341.2 L482.3 342.5 L482.5 343.8 L482.6 344.9 L482.9 345.9 L483.1 347.1 L483.4 348.3 L483.8 349.6 L484.3 350.8 L484.8 352.0 L485.3 353.2 L485.9 354.3 L486.5 355.4 L487.2 356.4 L487.9 357.4 L488.6 358.5 L489.4 359.5 L490.3 360.5 L491.2 361.5 L492.2 362.5 L493.3 363.5 L494.4 364.4 L495.5 365.2 L496.7 366.0 L498.0 366.8 L499.3 367.5 L500.7 368.2 L502.1 368.8 L503.6 369.3 L505.2 369.7 L506.8 369.9 L508.4 370.0 L509.9 370.0 L511.5 369.9 L513.0 369.7 L514.5 369.4 L516.0 369.0 L517.4 368.5 L518.9 367.9 L520.4 367.1 L521.7 366.3 L523.0 365.5 L524.2 364.6 L525.3 363.8 L526.4 363.0 L527.4 362.2 L528.4 361.5 L529.4 360.7 L530.3 359.9 L531.2 359.1 L532.1 358.4 L532.8 357.7 L533.5 357.1 L534.2 356.5 L534.8 355.8 L535.4 355.2 L536.0 354.6 L536.4 354.1 L536.9 353.6 L537.2 353.2 L537.5 352.9 L537.7 352.6 L532.3 347.4 L532.3 347.4 L532.0 347.6 L531.7 348.0 L531.3 348.3 L530.9 348.7 L530.4 349.1 L529.9 349.6 L529.4 350.0 L528.8 350.5 L528.1 351.1 L527.4 351.8 L526.7 352.4 L526.0 353.1 L525.2 353.8 L524.4 354.5 L523.5 355.1 L522.6 355.8 L521.6 356.5 L520.6 357.2 L519.5 357.9 L518.5 358.6 L517.4 359.2 L516.4 359.7 L515.5 360.2 L514.6 360.5 L513.6 360.8 L512.6 361.0 L511.6 361.2 L510.5 361.4 L509.5 361.5 L508.5 361.5 L507.6 361.4 L506.8 361.3 L506.0 361.1 L505.1 360.8 L504.2 360.5 L503.2 360.0 L502.3 359.5 L501.3 358.9 L500.4 358.3 L499.6 357.6 L498.9 357.0 L498.3 356.4 L497.6 355.7 L497.0 354.9 L496.4 354.1 L495.9 353.3 L495.3 352.5 L494.8 351.6 L494.3 350.8 L493.8 349.9 L493.4 349.1 L493.0 348.3 L492.7 347.5 L492.4 346.7 L492.1 345.8 L491.9 344.9 L491.7 344.0 L491.5 343.2 L491.4 342.5 L491.3 341.8 L491.3 341.0 L491.3 340.0 L491.3 338.6 L491.5 336.9 L491.7 334.7 L491.9 332.2 L492.2 329.4 L492.6 326.5 L493.0 323.5 L493.5 320.4 L494.1 317.5 L494.8 314.7 L495.7 311.9 L496.7 309.1 L497.8 306.2 L499.0 303.2 L500.3 300.2 L501.6 297.2 L502.8 294.3 L504.0 291.3 L505.2 288.4 L506.3 285.5 L507.4 282.6 L508.5 279.8 L509.6 277.1 L510.6 274.5 L511.6 272.2 L512.6 270.1 L513.4 268.3 L514.2 266.8 L514.9 265.5 L515.7 264.3 L516.4 263.1 L517.2 261.8 L518.1 260.5 L519.0 259.0 L520.0 257.4 L521.2 255.6 L522.3 253.9 L523.5 252.1 L524.7 250.3 L525.8 248.7 L526.8 247.2 L527.7 245.9 L528.3 244.8 L528.9 244.0 L529.3 243.3 L529.6 242.8 L529.9 242.3 L530.1 241.9 L530.4 241.4 L530.8 240.8 L531.2 240.2 L531.7 239.5 L532.3 238.8 L532.8 238.1 L533.3 237.4 L533.8 236.8 L534.2 236.2 L534.5 235.8Z"/><circle fill="#1a8bbd" cx="531.0" cy="233.0" r="4.50"/><circle fill="#1a8bbd" cx="535.0" cy="350.0" r="3.75"/><path fill="#1a8bbd" d="M474.7 275.7 L475.8 275.8 L477.1 275.8 L478.7 275.8 L480.6 275.8 L482.7 275.9 L485.0 275.8 L487.5 275.8 L490.2 275.7 L493.3 275.6 L496.8 275.5 L500.6 275.3 L504.6 275.1 L508.7 274.9 L512.7 274.7 L516.6 274.5 L520.3 274.2 L523.9 274.0 L527.6 273.7 L531.4 273.4 L535.1 273.1 L538.6 272.9 L541.6 272.6 L544.2 272.4 L546.2 272.2 L545.8 264.8 L545.8 264.8 L543.8 264.8 L541.2 264.9 L538.1 265.0 L534.6 265.1 L530.9 265.2 L527.1 265.4 L523.4 265.6 L519.7 265.8 L516.1 266.0 L512.2 266.3 L508.1 266.6 L504.1 266.9 L500.1 267.3 L496.3 267.6 L492.8 268.0 L489.8 268.3 L487.0 268.5 L484.5 268.8 L482.2 269.1 L480.2 269.4 L478.3 269.7 L476.8 269.9 L475.4 270.1 L474.3 270.3Z"/><circle fill="#1a8bbd" cx="474.5" cy="273.0" r="2.75"/><circle fill="#1a8bbd" cx="546.0" cy="268.5" r="3.75"/><path fill="#1a8bbd" d="M573.6 221.8 L573.0 223.3 L572.3 225.2 L571.5 227.4 L570.6 229.8 L569.6 232.5 L568.5 235.2 L567.4 238.0 L566.3 240.6 L565.2 243.3 L563.9 246.2 L562.5 249.2 L561.0 252.2 L559.6 255.4 L558.1 258.5 L556.7 261.6 L555.4 264.6 L554.2 267.6 L553.0 270.5 L551.9 273.4 L550.8 276.3 L549.7 279.1 L548.7 282.0 L547.6 284.9 L546.5 287.8 L545.4 290.8 L544.2 294.0 L543.0 297.3 L541.8 300.5 L540.7 303.6 L539.6 306.6 L538.6 309.3 L537.6 311.7 L536.7 313.8 L535.9 315.6 L535.0 317.3 L534.3 318.8 L533.5 320.2 L532.8 321.5 L532.1 322.9 L531.4 324.2 L530.8 325.5 L530.3 326.7 L529.9 327.8 L529.5 328.8 L529.2 329.7 L528.9 330.5 L528.7 331.1 L528.5 331.6 L535.5 334.4 L535.5 334.4 L535.7 333.9 L536.0 333.3 L536.3 332.6 L536.7 331.8 L537.1 330.9 L537.5 329.9 L538.0 328.9 L538.6 327.8 L539.2 326.7 L539.9 325.5 L540.6 324.2 L541.5 322.8 L542.4 321.2 L543.3 319.4 L544.4 317.3 L545.4 315.1 L546.5 312.5 L547.6 309.7 L548.8 306.7 L550.0 303.6 L551.3 300.4 L552.5 297.1 L553.7 294.0 L554.9 291.0 L556.1 288.1 L557.2 285.3 L558.3 282.4 L559.5 279.6 L560.6 276.8 L561.8 274.0 L562.9 271.2 L564.2 268.4 L565.5 265.5 L566.8 262.4 L568.2 259.4 L569.7 256.3 L571.1 253.2 L572.5 250.1 L573.8 247.2 L575.1 244.4 L576.2 241.5 L577.4 238.7 L578.5 235.9 L579.5 233.2 L580.4 230.7 L581.2 228.4 L581.9 226.6 L582.4 225.2Z"/><circle fill="#1a8bbd" cx="578.0" cy="223.5" r="4.75"/><circle fill="#1a8bbd" cx="532.0" cy="333.0" r="3.75"/><path fill="#1a8bbd" d="M552.5 296.0 L552.9 295.3 L553.4 294.4 L554.0 293.4 L554.7 292.3 L555.4 291.1 L556.2 289.9 L556.9 288.8 L557.5 287.9 L558.2 287.0 L558.8 286.1 L559.6 285.1 L560.3 284.2 L561.0 283.3 L561.7 282.5 L562.4 281.7 L563.1 280.9 L563.8 280.1 L564.5 279.4 L565.3 278.7 L566.0 278.0 L566.6 277.4 L567.3 276.9 L567.9 276.4 L568.4 276.0 L569.0 275.6 L569.6 275.2 L570.1 275.0 L570.5 274.8 L570.7 274.6 L570.7 274.6 L570.4 274.7 L569.6 274.5 L568.9 274.2 L568.6 273.9 L568.5 273.8 L568.5 273.8 L568.6 274.0 L568.7 274.3 L568.7 274.6 L568.8 274.9 L568.7 275.3 L568.6 275.9 L568.4 276.7 L568.1 277.7 L567.8 278.7 L567.5 279.8 L567.2 280.9 L566.9 282.0 L566.7 282.8 L566.5 283.6 L566.3 284.3 L566.1 285.0 L566.0 285.8 L565.8 286.6 L565.6 287.6 L565.4 288.7 L565.2 290.0 L565.0 291.3 L564.8 292.8 L564.6 294.3 L564.4 295.8 L564.2 297.4 L564.0 298.9 L563.8 300.4 L563.6 301.9 L563.3 303.4 L563.1 305.0 L562.8 306.6 L562.5 308.2 L562.3 309.8 L562.1 311.4 L562.0 313.0 L561.9 314.5 L561.8 315.9 L561.7 317.4 L561.6 318.9 L561.6 320.3 L561.7 321.8 L561.8 323.3 L562.1 324.7 L562.4 326.0 L562.8 327.3 L563.2 328.6 L563.8 329.8 L564.4 331.0 L565.2 332.2 L566.3 333.2 L567.4 334.1 L568.7 334.8 L569.9 335.2 L571.3 335.5 L572.7 335.7 L574.2 335.6 L575.8 335.3 L577.3 334.8 L578.7 334.0 L580.0 333.2 L581.2 332.3 L582.5 331.2 L583.8 329.9 L585.1 328.5 L586.4 326.7 L587.6 324.8 L588.9 322.5 L590.1 319.7 L591.5 316.4 L592.8 312.7 L594.1 308.8 L595.4 305.1 L596.5 301.7 L597.4 298.9 L598.1 296.8 L593.9 295.2 L593.9 295.2 L593.0 297.2 L591.9 300.0 L590.5 303.3 L589.0 306.9 L587.4 310.6 L585.9 314.0 L584.4 317.1 L583.1 319.5 L582.0 321.3 L580.9 322.8 L579.9 324.1 L578.9 325.2 L577.9 326.1 L577.0 326.8 L576.1 327.5 L575.3 328.0 L574.6 328.3 L574.1 328.4 L573.6 328.5 L573.1 328.4 L572.6 328.4 L572.2 328.2 L571.8 328.0 L571.6 327.9 L571.4 327.7 L571.3 327.5 L571.0 327.1 L570.8 326.5 L570.5 325.8 L570.3 325.0 L570.1 324.2 L569.9 323.3 L569.8 322.4 L569.8 321.5 L569.8 320.4 L569.9 319.2 L570.0 317.9 L570.1 316.6 L570.3 315.2 L570.4 313.8 L570.6 312.4 L570.8 311.0 L571.0 309.5 L571.2 307.9 L571.5 306.4 L571.7 304.8 L572.0 303.2 L572.2 301.6 L572.4 300.0 L572.6 298.5 L572.8 296.9 L573.0 295.4 L573.2 293.9 L573.4 292.5 L573.6 291.2 L573.8 290.1 L574.0 289.1 L574.1 288.3 L574.3 287.6 L574.4 286.9 L574.6 286.3 L574.7 285.6 L574.9 284.8 L575.1 284.0 L575.3 283.2 L575.6 282.3 L575.9 281.2 L576.3 280.1 L576.6 278.9 L576.9 277.7 L577.2 276.4 L577.2 275.1 L577.2 273.8 L577.0 272.7 L576.7 271.5 L576.3 270.4 L575.8 269.3 L575.0 268.3 L573.9 267.3 L572.4 266.5 L570.7 266.2 L569.2 266.3 L568.0 266.6 L567.0 267.0 L566.1 267.5 L565.2 268.0 L564.4 268.5 L563.6 269.0 L562.7 269.6 L561.9 270.3 L561.0 271.0 L560.2 271.8 L559.3 272.6 L558.5 273.4 L557.7 274.3 L556.9 275.1 L556.1 276.0 L555.3 276.9 L554.4 277.9 L553.6 278.9 L552.8 279.9 L552.0 281.0 L551.2 282.0 L550.5 283.1 L549.7 284.3 L549.0 285.6 L548.2 286.9 L547.5 288.2 L546.9 289.4 L546.3 290.5 L545.9 291.4 L545.5 292.0Z"/><circle fill="#1a8bbd" cx="596.0" cy="296.0" r="2.25"/><path fill="#1a8bbd" fill-rule="evenodd" d="M352.3 234 C353 227 366 224.5 371.5 230 C376.5 236 376 252 369.5 258.5 C366 262 358 264 350.5 262 Z M362.8 239 C366 239 366.5 242 365.5 245 C364.5 248 360.5 249.5 359 247 C358 244.5 359.5 239 362.8 239Z"/><path fill="#3bb34a" stroke="#34a043" stroke-width="0.7" d="M589.2 226.5L604.7 207.4L628.5 226.5L666.8 175.1L688 190.6L631.5 254.8Z"/></svg>
<div class="a" style="left:0;top:0;width:728px;height:21px;background:#525252;border-bottom:1px solid #2a2a2a"></div>
<div class="t" style="left:0px;top:4.6px;font-size:9px;color:#ececec;letter-spacing:-0.3px;text-shadow:0 0 0.5px #ddd">e</div>
<div class="t" style="left:18px;top:4.6px;font-size:9px;color:#ececec;letter-spacing:-0.3px;text-shadow:0 0 0.5px #ddd">Layer</div>
<div class="t" style="left:51.5px;top:4.6px;font-size:9px;color:#ececec;letter-spacing:-0.3px;text-shadow:0 0 0.5px #ddd">Type</div>
<div class="t" style="left:83.5px;top:4.6px;font-size:9px;color:#ececec;letter-spacing:-0.3px;text-shadow:0 0 0.5px #ddd">Select</div>
<div class="t" style="left:120px;top:4.6px;font-size:9px;color:#ececec;letter-spacing:-0.3px;text-shadow:0 0 0.5px #ddd">Filter</div>
<div class="t" style="left:153px;top:4.6px;font-size:9px;color:#ececec;letter-spacing:-0.3px;text-shadow:0 0 0.5px #ddd">3D</div>
<div class="t" style="left:176px;top:4.6px;font-size:9px;color:#ececec;letter-spacing:-0.3px;text-shadow:0 0 0.5px #ddd">View</div>
<div class="t" style="left:208px;top:4.6px;font-size:9px;color:#ececec;letter-spacing:-0.3px;text-shadow:0 0 0.5px #ddd">Window</div>
<div class="t" style="left:254px;top:4.6px;font-size:9px;color:#ececec;letter-spacing:-0.3px;text-shadow:0 0 0.5px #ddd">Help</div>
<div class="a" style="left:0;top:21px;width:728px;height:23px;background:#4b4b4b"></div>
<div class="a" style="left:7px;top:25.5px;width:42px;height:15px;background:#5a5a5a;border:1px solid #2e2e2e;border-radius:1px;box-shadow:inset 0 1px 0 #6a6a6a"></div>
<div class="t" style="left:12.5px;top:28.5px;font-size:8.5px;color:#f0f0f0;text-shadow:0 0 0.5px #ddd;transform:scaleX(0.87);transform-origin:0 0">Group</div>
<svg class="a" style="left:41px;top:29px" width="6" height="8" viewBox="0 0 6 8"><path d="M3 0.5L5.5 3H0.5z M3 7.5L5.5 5H0.5z" fill="#e0e0e0"/></svg>
<div class="a" style="left:56px;top:24px;width:1px;height:17px;background:#383838;box-shadow:1px 0 0 #555"></div>
<div class="a" style="left:173px;top:24px;width:1px;height:17px;background:#383838;box-shadow:1px 0 0 #555"></div>
<div class="a" style="left:299px;top:24px;width:1px;height:17px;background:#383838;box-shadow:1px 0 0 #555"></div>
<div class="a" style="left:428px;top:24px;width:1px;height:17px;background:#383838;box-shadow:1px 0 0 #555"></div>
<div class="a" style="left:457px;top:24px;width:1px;height:17px;background:#383838;box-shadow:1px 0 0 #555"></div>
<div class="a" style="left:64px;top:28px;width:10px;height:10px;background:#5e5e5e;border:1px solid #2e2e2e"></div>
<div class="t" style="left:77.8px;top:28.3px;font-size:8.5px;color:#f0f0f0;text-shadow:0 0 0.5px #ddd;transform:scaleX(0.873);transform-origin:0 0">Show Transform Controls</div>
<svg class="a" style="left:182px;top:27px" width="14" height="11" viewBox="0 0 14 11"><path d="M1 0.5H12" stroke="#7c7c7c" stroke-width="1"/><rect x="2.5" y="1.5" width="3" height="8" fill="none" stroke="#aaaaaa"/><rect x="7" y="1.5" width="4" height="4" fill="#aaaaaa"/></svg>
<svg class="a" style="left:200px;top:27px" width="14" height="11" viewBox="0 0 14 11"><path d="M0 5.5H12" stroke="#7c7c7c" stroke-width="1"/><rect x="2.5" y="1.5" width="3" height="8" fill="none" stroke="#aaaaaa"/><rect x="7" y="3.5" width="4" height="4" fill="#aaaaaa"/></svg>
<svg class="a" style="left:217px;top:27px" width="14" height="11" viewBox="0 0 14 11"><path d="M1 10.5H12" stroke="#7c7c7c" stroke-width="1"/><rect x="2.5" y="1.5" width="3" height="8" fill="none" stroke="#aaaaaa"/><rect x="7" y="5.5" width="4" height="4" fill="#aaaaaa"/></svg>
<svg class="a" style="left:242px;top:27px" width="14" height="11" viewBox="0 0 14 11"><path d="M1.5 0V11" stroke="#7c7c7c"/><rect x="2.5" y="2.5" width="5" height="2" fill="#aaaaaa"/><rect x="2.5" y="6.5" width="9" height="3" fill="none" stroke="#aaaaaa"/></svg>
<svg class="a" style="left:259px;top:27px" width="14" height="11" viewBox="0 0 14 11"><path d="M6.5 0V11" stroke="#7c7c7c"/><rect x="4" y="2" width="5" height="2.5" fill="#aaaaaa"/><rect x="2.5" y="6.5" width="9" height="3" fill="none" stroke="#aaaaaa"/></svg>
<svg class="a" style="left:277px;top:27px" width="14" height="11" viewBox="0 0 14 11"><path d="M11.5 0V11" stroke="#7c7c7c"/><rect x="6" y="2" width="5" height="2.5" fill="#aaaaaa"/><rect x="1.5" y="6.5" width="9" height="3" fill="none" stroke="#aaaaaa"/></svg>
<svg class="a" style="left:308px;top:27px" width="14" height="11" viewBox="0 0 14 11"><path d="M1 1.5H13M1 9.5H13" stroke="#7c7c7c"/><rect x="3.5" y="3.5" width="7" height="3" fill="none" stroke="#aaaaaa"/><path d="M2 2.5H12" stroke="#aaaaaa"/></svg>
<svg class="a" style="left:326px;top:27px" width="14" height="11" viewBox="0 0 14 11"><path d="M1 1.5H13M1 9.5H13" stroke="#7c7c7c"/><rect x="3.5" y="3.5" width="7" height="3" fill="none" stroke="#aaaaaa"/><path d="M2 5.5H12" stroke="#aaaaaa"/></svg>
<svg class="a" style="left:344px;top:27px" width="14" height="11" viewBox="0 0 14 11"><path d="M1 1.5H13M1 9.5H13" stroke="#7c7c7c"/><rect x="3.5" y="3.5" width="7" height="3" fill="none" stroke="#aaaaaa"/><path d="M2 8.5H12" stroke="#aaaaaa"/></svg>
<svg class="a" style="left:368px;top:27px" width="14" height="11" viewBox="0 0 14 11"><path d="M1.5 0.5V10.5M11.5 0.5V10.5" stroke="#7c7c7c"/><rect x="3.5" y="2.5" width="3" height="6" fill="none" stroke="#aaaaaa"/><path d="M3.5 1V10" stroke="#aaaaaa"/></svg>
<svg class="a" style="left:386px;top:27px" width="14" height="11" viewBox="0 0 14 11"><path d="M1.5 0.5V10.5M11.5 0.5V10.5" stroke="#7c7c7c"/><rect x="3.5" y="2.5" width="3" height="6" fill="none" stroke="#aaaaaa"/><path d="M6.5 1V10" stroke="#aaaaaa"/></svg>
<svg class="a" style="left:404px;top:27px" width="14" height="11" viewBox="0 0 14 11"><path d="M1.5 0.5V10.5M11.5 0.5V10.5" stroke="#7c7c7c"/><rect x="3.5" y="2.5" width="3" height="6" fill="none" stroke="#aaaaaa"/><path d="M9.5 1V10" stroke="#aaaaaa"/></svg>
<svg class="a" style="left:434px;top:27px" width="14" height="11" viewBox="0 0 14 11"><path d="M1.5 0.5H6.5M8.5 0.5H13.5" stroke="#aaaaaa"/><rect x="2.5" y="2.5" width="3" height="8" fill="none" stroke="#aaaaaa"/><rect x="9.5" y="2.5" width="3" height="8" fill="none" stroke="#aaaaaa"/><path d="M4 2V5M11 6V9" stroke="#aaaaaa"/></svg>
<div class="t" style="left:464.5px;top:28px;font-size:8.5px;color:#c4c4c4;text-shadow:0 0 0.5px #bbb;transform:scaleX(0.85);transform-origin:0 0">3D Mode:</div>
<svg class="a" style="left:507px;top:26px" width="70" height="14" viewBox="0 0 70 14" fill="none" stroke="#a8a8a8" stroke-width="1.1">
<path d="M2 8 C2 4 6 3 8 5 C9 2 14 2 14 6 C15 7 14 10 11 10 L4 10 C2 10 1 9 2 8Z"/><circle cx="9" cy="6" r="2.2"/>
<circle cx="26" cy="7" r="5.5"/><circle cx="26" cy="7" r="2.3" fill="#8a8a8a" stroke="none"/>
<path d="M44 2.5V11.5M39.5 7H48.5" stroke-dasharray="1.2 1"/><path d="M44 0.5l-2 2.2h4zM44 13.5l-2-2.2h4zM37.5 7l2.2-2v4zM50.5 7l-2.2-2v4z" fill="#a8a8a8" stroke="none"/>
<path d="M62 3.5V10.5M58.5 7H65.5" stroke-dasharray="1.2 1"/><path d="M62 0.5l-2.4 2.6h4.8zM62 13.5l-2.4-2.6h4.8zM55.5 7l2.6-2.4v4.8zM68.5 7l-2.6-2.4v4.8z" fill="#a8a8a8" stroke="none"/>
</svg>
<div class="a" style="left:0;top:44px;width:728px;height:17px;background:linear-gradient(#444 0,#3f3f3f 2px,#3d3d3d 13px,#353535 17px)"></div>
<div class="a" style="left:0;top:47px;width:136px;height:14px;background:#525252"></div>
<div class="t" style="left:0;top:49.2px;font-size:8.5px;color:#ececec;letter-spacing:-0.05px;text-shadow:0 0 0.5px #ddd">@ 41.8% (Jane Smith, RGB/8) *</div>
<svg class="a" style="left:125px;top:51px" width="6" height="6" viewBox="0 0 6 6"><path d="M0.8 0.8L5.2 5.2M5.2 0.8L0.8 5.2" stroke="#ececec" stroke-width="1.2"/></svg>
<div class="a" style="left:0;top:60.5px;width:728px;height:12px;background:#2d2d2d"></div>
<div class="a" style="left:-19.18px;top:61px;width:1px;height:11.5px;background:#767676"></div><div class="a" style="left:-12.92px;top:70.5px;width:1px;height:2px;background:#6e6e6e"></div><div class="a" style="left:-6.67px;top:70.5px;width:1px;height:2px;background:#6e6e6e"></div><div class="a" style="left:-0.41px;top:70.5px;width:1px;height:2px;background:#6e6e6e"></div><div class="a" style="left:5.84px;top:70.5px;width:1px;height:2px;background:#6e6e6e"></div><div class="t" style="left:-16.48px;top:60.3px;font-size:7px;color:#d6d6d6;letter-spacing:-0.2px">500</div><div class="a" style="left:12.10px;top:61px;width:1px;height:11.5px;background:#767676"></div><div class="a" style="left:18.36px;top:70.5px;width:1px;height:2px;background:#6e6e6e"></div><div class="a" style="left:24.61px;top:70.5px;width:1px;height:2px;background:#6e6e6e"></div><div class="a" style="left:30.87px;top:70.5px;width:1px;height:2px;background:#6e6e6e"></div><div class="a" style="left:37.12px;top:70.5px;width:1px;height:2px;background:#6e6e6e"></div><div class="t" style="left:14.80px;top:60.3px;font-size:7px;color:#d6d6d6;letter-spacing:-0.2px">600</div><div class="a" style="left:43.38px;top:61px;width:1px;height:11.5px;background:#767676"></div><div class="a" style="left:49.64px;top:70.5px;width:1px;height:2px;background:#6e6e6e"></div><div class="a" style="left:55.89px;top:70.5px;width:1px;height:2px;background:#6e6e6e"></div><div class="a" style="left:62.15px;top:70.5px;width:1px;height:2px;background:#6e6e6e"></div><div class="a" style="left:68.40px;top:70.5px;width:1px;height:2px;background:#6e6e6e"></div><div class="t" style="left:46.08px;top:60.3px;font-size:7px;color:#d6d6d6;letter-spacing:-0.2px">700</div><div class="a" style="left:74.66px;top:61px;width:1px;height:11.5px;background:#767676"></div><div class="a" style="left:80.92px;top:70.5px;width:1px;height:2px;background:#6e6e6e"></div><div class="a" style="left:87.17px;top:70.5px;width:1px;height:2px;background:#6e6e6e"></div><div class="a" style="left:93.43px;top:70.5px;width:1px;height:2px;background:#6e6e6e"></div><div class="a" style="left:99.68px;top:70.5px;width:1px;height:2px;background:#6e6e6e"></div><div class="t" style="left:77.36px;top:60.3px;font-size:7px;color:#d6d6d6;letter-spacing:-0.2px">800</div><div class="a" style="left:105.94px;top:61px;width:1px;height:11.5px;background:#767676"></div><div class="a" style="left:112.20px;top:70.5px;width:1px;height:2px;background:#6e6e6e"></div><div class="a" style="left:118.45px;top:70.5px;width:1px;height:2px;background:#6e6e6e"></div><div class="a" style="left:124.71px;top:70.5px;width:1px;height:2px;background:#6e6e6e"></div><div class="a" style="left:130.96px;top:70.5px;width:1px;height:2px;background:#6e6e6e"></div><div class="t" style="left:108.64px;top:60.3px;font-size:7px;color:#d6d6d6;letter-spacing:-0.2px">900</div><div class="a" style="left:137.22px;top:61px;width:1px;height:11.5px;background:#767676"></div><div class="a" style="left:143.48px;top:70.5px;width:1px;height:2px;background:#6e6e6e"></div><div class="a" style="left:149.73px;top:70.5px;width:1px;height:2px;background:#6e6e6e"></div><div class="a" style="left:155.99px;top:70.5px;width:1px;height:2px;background:#6e6e6e"></div><div class="a" style="left:162.24px;top:70.5px;width:1px;height:2px;background:#6e6e6e"></div><div class="t" style="left:139.92px;top:60.3px;font-size:7px;color:#d6d6d6;letter-spacing:-0.2px">1000</div><div class="a" style="left:168.50px;top:61px;width:1px;height:11.5px;background:#767676"></div><div class="a" style="left:174.76px;top:70.5px;width:1px;height:2px;background:#6e6e6e"></div><div class="a" style="left:181.01px;top:70.5px;width:1px;height:2px;background:#6e6e6e"></div><div class="a" style="left:187.27px;top:70.5px;width:1px;height:2px;background:#6e6e6e"></div><div class="a" style="left:193.52px;top:70.5px;width:1px;height:2px;background:#6e6e6e"></div><div class="t" style="left:171.20px;top:60.3px;font-size:7px;color:#d6d6d6;letter-spacing:-0.2px">1100</div><div class="a" style="left:199.78px;top:61px;width:1px;height:11.5px;background:#767676"></div><div class="a" style="left:206.04px;top:70.5px;width:1px;height:2px;background:#6e6e6e"></div><div class="a" style="left:212.29px;top:70.5px;width:1px;height:2px;background:#6e6e6e"></div><div class="a" style="left:218.55px;top:70.5px;width:1px;height:2px;background:#6e6e6e"></div><div class="a" style="left:224.80px;top:70.5px;width:1px;height:2px;background:#6e6e6e"></div><div class="t" style="left:202.48px;top:60.3px;font-size:7px;color:#d6d6d6;letter-spacing:-0.2px">1200</div><div class="a" style="left:231.06px;top:61px;width:1px;height:11.5px;background:#767676"></div><div class="a" style="left:237.32px;top:70.5px;width:1px;height:2px;background:#6e6e6e"></div><div class="a" style="left:243.57px;top:70.5px;width:1px;height:2px;background:#6e6e6e"></div><div class="a" style="left:249.83px;top:70.5px;width:1px;height:2px;background:#6e6e6e"></div><div class="a" style="left:256.08px;top:70.5px;width:1px;height:2px;background:#6e6e6e"></div><div class="t" style="left:233.76px;top:60.3px;font-size:7px;color:#d6d6d6;letter-spacing:-0.2px">1300</div><div class="a" style="left:262.34px;top:61px;width:1px;height:11.5px;background:#767676"></div><div class="a" style="left:268.60px;top:70.5px;width:1px;height:2px;background:#6e6e6e"></div><div class="a" style="left:274.85px;top:70.5px;width:1px;height:2px;background:#6e6e6e"></div><div class="a" style="left:281.11px;top:70.5px;width:1px;height:2px;background:#6e6e6e"></div><div class="a" style="left:287.36px;top:70.5px;width:1px;height:2px;background:#6e6e6e"></div><div class="t" style="left:265.04px;top:60.3px;font-size:7px;color:#d6d6d6;letter-spacing:-0.2px">1400</div><div class="a" style="left:293.62px;top:61px;width:1px;height:11.5px;background:#767676"></div><div class="a" style="left:299.88px;top:70.5px;width:1px;height:2px;background:#6e6e6e"></div><div class="a" style="left:306.13px;top:70.5px;width:1px;height:2px;background:#6e6e6e"></div><div class="a" style="left:312.39px;top:70.5px;width:1px;height:2px;background:#6e6e6e"></div><div class="a" style="left:318.64px;top:70.5px;width:1px;height:2px;background:#6e6e6e"></div><div class="t" style="left:296.32px;top:60.3px;font-size:7px;color:#d6d6d6;letter-spacing:-0.2px">1500</div><div class="a" style="left:324.90px;top:61px;width:1px;height:11.5px;background:#767676"></div><div class="a" style="left:331.16px;top:70.5px;width:1px;height:2px;background:#6e6e6e"></div><div class="a" style="left:337.41px;top:70.5px;width:1px;height:2px;background:#6e6e6e"></div><div class="a" style="left:343.67px;top:70.5px;width:1px;height:2px;background:#6e6e6e"></div><div class="a" style="left:349.92px;top:70.5px;width:1px;height:2px;background:#6e6e6e"></div><div class="t" style="left:327.60px;top:60.3px;font-size:7px;color:#d6d6d6;letter-spacing:-0.2px">1600</div><div class="a" style="left:356.18px;top:61px;width:1px;height:11.5px;background:#767676"></div><div class="a" style="left:362.44px;top:70.5px;width:1px;height:2px;background:#6e6e6e"></div><div class="a" style="left:368.69px;top:70.5px;width:1px;height:2px;background:#6e6e6e"></div><div class="a" style="left:374.95px;top:70.5px;width:1px;height:2px;background:#6e6e6e"></div><div class="a" style="left:381.20px;top:70.5px;width:1px;height:2px;background:#6e6e6e"></div><div class="t" style="left:358.88px;top:60.3px;font-size:7px;color:#d6d6d6;letter-spacing:-0.2px">1700</div><div class="a" style="left:387.46px;top:61px;width:1px;height:11.5px;background:#767676"></div><div class="a" style="left:393.72px;top:70.5px;width:1px;height:2px;background:#6e6e6e"></div><div class="a" style="left:399.97px;top:70.5px;width:1px;height:2px;background:#6e6e6e"></div><div class="a" style="left:406.23px;top:70.5px;width:1px;height:2px;background:#6e6e6e"></div><div class="a" style="left:412.48px;top:70.5px;width:1px;height:2px;background:#6e6e6e"></div><div class="t" style="left:390.16px;top:60.3px;font-size:7px;color:#d6d6d6;letter-spacing:-0.2px">1800</div><div class="a" style="left:418.74px;top:61px;width:1px;height:11.5px;background:#767676"></div><div class="a" style="left:425.00px;top:70.5px;width:1px;height:2px;background:#6e6e6e"></div><div class="a" style="left:431.25px;top:70.5px;width:1px;height:2px;background:#6e6e6e"></div><div class="a" style="left:437.51px;top:70.5px;width:1px;height:2px;background:#6e6e6e"></div><div class="a" style="left:443.76px;top:70.5px;width:1px;height:2px;background:#6e6e6e"></div><div class="t" style="left:421.44px;top:60.3px;font-size:7px;color:#d6d6d6;letter-spacing:-0.2px">1900</div><div class="a" style="left:450.02px;top:61px;width:1px;height:11.5px;background:#767676"></div><div class="a" style="left:456.28px;top:70.5px;width:1px;height:2px;background:#6e6e6e"></div><div class="a" style="left:462.53px;top:70.5px;width:1px;height:2px;background:#6e6e6e"></div><div class="a" style="left:468.79px;top:70.5px;width:1px;height:2px;background:#6e6e6e"></div><div class="a" style="left:475.04px;top:70.5px;width:1px;height:2px;background:#6e6e6e"></div><div class="t" style="left:452.72px;top:60.3px;font-size:7px;color:#d6d6d6;letter-spacing:-0.2px">2000</div><div class="a" style="left:481.30px;top:61px;width:1px;height:11.5px;background:#767676"></div><div class="a" style="left:487.56px;top:70.5px;width:1px;height:2px;background:#6e6e6e"></div><div class="a" style="left:493.81px;top:70.5px;width:1px;height:2px;background:#6e6e6e"></div><div class="a" style="left:500.07px;top:70.5px;width:1px;height:2px;background:#6e6e6e"></div><div class="a" style="left:506.32px;top:70.5px;width:1px;height:2px;background:#6e6e6e"></div><div class="t" style="left:484.00px;top:60.3px;font-size:7px;color:#d6d6d6;letter-spacing:-0.2px">2100</div><div class="a" style="left:512.58px;top:61px;width:1px;height:11.5px;background:#767676"></div><div class="a" style="left:518.84px;top:70.5px;width:1px;height:2px;background:#6e6e6e"></div><div class="a" style="left:525.09px;top:70.5px;width:1px;height:2px;background:#6e6e6e"></div><div class="a" style="left:531.35px;top:70.5px;width:1px;height:2px;background:#6e6e6e"></div><div class="a" style="left:537.60px;top:70.5px;width:1px;height:2px;background:#6e6e6e"></div><div class="t" style="left:515.28px;top:60.3px;font-size:7px;color:#d6d6d6;letter-spacing:-0.2px">2200</div><div class="a" style="left:543.86px;top:61px;width:1px;height:11.5px;background:#767676"></div><div class="a" style="left:550.12px;top:70.5px;width:1px;height:2px;background:#6e6e6e"></div><div class="a" style="left:556.37px;top:70.5px;width:1px;height:2px;background:#6e6e6e"></div><div class="a" style="left:562.63px;top:70.5px;width:1px;height:2px;background:#6e6e6e"></div><div class="a" style="left:568.88px;top:70.5px;width:1px;height:2px;background:#6e6e6e"></div><div class="t" style="left:546.56px;top:60.3px;font-size:7px;color:#d6d6d6;letter-spacing:-0.2px">2300</div><div class="a" style="left:575.14px;top:61px;width:1px;height:11.5px;background:#767676"></div><div class="a" style="left:581.40px;top:70.5px;width:1px;height:2px;background:#6e6e6e"></div><div class="a" style="left:587.65px;top:70.5px;width:1px;height:2px;background:#6e6e6e"></div><div class="a" style="left:593.91px;top:70.5px;width:1px;height:2px;background:#6e6e6e"></div><div class="a" style="left:600.16px;top:70.5px;width:1px;height:2px;background:#6e6e6e"></div><div class="t" style="left:577.84px;top:60.3px;font-size:7px;color:#d6d6d6;letter-spacing:-0.2px">2400</div>
<div class="a" style="left:0;top:531px;width:728px;height:15px;background:#282828"></div>
<div class="a" style="left:0;top:533px;width:157px;height:11px;background:#484848"></div>
<div class="a" style="left:157px;top:533px;width:571px;height:11px;background:#3a3a3a"></div>
<div class="a" style="left:363px;top:534px;width:174px;height:9px;background:linear-gradient(#9a9a9a,#7a7a7a);border-radius:3px"></div>
<div class="t" style="left:53px;top:533.5px;font-size:8px;color:#f0f0f0;text-shadow:0 0 0.5px #ddd;transform:scaleX(0.92);transform-origin:0 0">Doc: 22.0M/1.37M</div>
<svg class="a" style="left:0;top:533px" width="30" height="11" viewBox="0 0 30 11"><rect x="-2" y="2" width="4.5" height="7" rx="1" fill="#f0f0f0"/><path d="M8.5 3.5V9.5H15.5V7" fill="none" stroke="#ddd"/><path d="M10 7.5C11 5 13 4 15 4V2.5L17 4.5L15 6.5V5.2C13.5 5.2 11.5 6 10 7.5Z" fill="#ddd"/></svg>
<div class="a" style="left:29px;top:544.5px;width:42px;height:1.5px;background:#9a9a9a"></div>
<svg class="a" style="left:149px;top:534px" width="12" height="10" viewBox="0 0 12 10"><path d="M2 1L7 5L2 9Z" fill="#eee"/></svg>
<svg class="a" style="left:161px;top:535px" width="6" height="8" viewBox="0 0 6 8"><path d="M4.5 1L1.5 4L4.5 7Z" fill="#ccc"/></svg>
<div class="a" style="left:577px;top:0;width:151px;height:117px;background:#2a2a2a"></div>
<div class="a" style="left:579px;top:0;width:149px;height:9px;background:linear-gradient(#383838,#2e2e2e)"></div>
<div class="a" style="left:579px;top:9px;width:149px;height:14px;background:#3a3a3a"></div>
<div class="a" style="left:579px;top:10px;width:30px;height:13px;background:#3c3c3c;border-right:1px solid #2c2c2c"></div>
<div class="a" style="left:609.5px;top:10px;width:43.5px;height:13px;background:#4d4d4d;border:1px solid #5c5c5c;border-bottom:none"></div>
<div class="a" style="left:653px;top:10px;width:46px;height:13px;background:#3c3c3c;border-right:1px solid #2c2c2c"></div>
<div class="t" style="left:584px;top:13px;font-size:8px;color:#c8c8c8;letter-spacing:-0.25px;text-shadow:0 0 0.5px #c8c8c8">Color</div>
<div class="t" style="left:614.4px;top:13px;font-size:8px;color:#f6f6f6;letter-spacing:-0.3px;text-shadow:0 0 0.6px #fff">Swatches</div>
<div class="t" style="left:658px;top:13px;font-size:8px;color:#c0c0c0;letter-spacing:0px;text-shadow:0 0 0.5px #c0c0c0">Navigator</div>
<svg class="a" style="left:711px;top:3px" width="17" height="6" viewBox="0 0 17 6"><path d="M3.5 0.5L0.8 3L3.5 5.5Z M6.5 0.5L3.8 3L6.5 5.5Z" fill="#d8d8d8"/><path d="M13.5 0.8L17 4.5M17 0.8L13.5 4.5" stroke="#d0d0d0" stroke-width="1.1"/></svg>
<svg class="a" style="left:720px;top:13px" width="8" height="8" viewBox="0 0 8 8"><path d="M0 1.5H4L2 4Z" fill="#ddd"/><path d="M4 1H8M4 3.5H8M4 6H8" stroke="#bbb"/></svg>
<div class="a" style="left:579px;top:23px;width:149px;height:86px;background:#444"></div>
<div class="a" style="left:578px;top:23px;width:135px;height:73.5px;background:#3a3a3a"></div>
<div class="a" style="left:683px;top:81px;width:30px;height:15.5px;background:#444"></div>
<div class="a" style="left:578.8px;top:23.5px;width:13.9px;height:11.7px;background:#fde78c"></div>
<div class="a" style="left:593.8px;top:23.5px;width:13.9px;height:11.7px;background:#fbbfa6"></div>
<div class="a" style="left:608.8px;top:23.5px;width:13.9px;height:11.7px;background:#f8a0cf"></div>
<div class="a" style="left:623.8px;top:23.5px;width:13.9px;height:11.7px;background:#f58ce6"></div>
<div class="a" style="left:638.8px;top:23.5px;width:13.9px;height:11.7px;background:#b39ce4"></div>
<div class="a" style="left:653.8px;top:23.5px;width:13.9px;height:11.7px;background:#63d5c3"></div>
<div class="a" style="left:668.8px;top:23.5px;width:13.9px;height:11.7px;background:#f2ef9a"></div>
<div class="a" style="left:683.8px;top:23.5px;width:13.9px;height:11.7px;background:#faec9f"></div>
<div class="a" style="left:698.8px;top:23.5px;width:13.9px;height:11.7px;background:#fcd0c0"></div>
<div class="a" style="left:578.8px;top:36.0px;width:13.9px;height:14.2px;background:#f6a9db"></div>
<div class="a" style="left:593.8px;top:36.0px;width:13.9px;height:14.2px;background:#f4a2ee"></div>
<div class="a" style="left:608.8px;top:36.0px;width:13.9px;height:14.2px;background:#c6b2ee"></div>
<div class="a" style="left:623.8px;top:36.0px;width:13.9px;height:14.2px;background:#474747"></div>
<div class="a" style="left:638.8px;top:36.0px;width:13.9px;height:14.2px;background:#ea5656"></div>
<div class="a" style="left:653.8px;top:36.0px;width:13.9px;height:14.2px;background:#d7464e"></div>
<div class="a" style="left:668.8px;top:36.0px;width:13.9px;height:14.2px;background:#fdfdfd"></div>
<div class="a" style="left:683.8px;top:36.0px;width:13.9px;height:14.2px;background:#183d7a"></div>
<div class="a" style="left:698.8px;top:36.0px;width:13.9px;height:14.2px;background:#030303"></div>
<div class="a" style="left:578.8px;top:51.0px;width:13.9px;height:14.2px;background:#b8c8a5"></div>
<div class="a" style="left:593.8px;top:51.0px;width:13.9px;height:14.2px;background:#232323"></div>
<div class="a" style="left:608.8px;top:51.0px;width:13.9px;height:14.2px;background:#8a8a8a"></div>
<div class="a" style="left:623.8px;top:51.0px;width:13.9px;height:14.2px;background:#c22b2b"></div>
<div class="a" style="left:638.8px;top:51.0px;width:13.9px;height:14.2px;background:#207052"></div>
<div class="a" style="left:653.8px;top:51.0px;width:13.9px;height:14.2px;background:#592310"></div>
<div class="a" style="left:668.8px;top:51.0px;width:13.9px;height:14.2px;background:#1f64b7"></div>
<div class="a" style="left:683.8px;top:51.0px;width:13.9px;height:14.2px;background:#e52129"></div>
<div class="a" style="left:698.8px;top:51.0px;width:13.9px;height:14.2px;background:#7cc67f"></div>
<div class="a" style="left:578.8px;top:66.0px;width:13.9px;height:14.2px;background:#24dc37"></div>
<div class="a" style="left:593.8px;top:66.0px;width:13.9px;height:14.2px;background:#fbe01c"></div>
<div class="a" style="left:608.8px;top:66.0px;width:13.9px;height:14.2px;background:#c6410f"></div>
<div class="a" style="left:623.8px;top:66.0px;width:13.9px;height:14.2px;background:#a7180f"></div>
<div class="a" style="left:638.8px;top:66.0px;width:13.9px;height:14.2px;background:#3f3c3a"></div>
<div class="a" style="left:653.8px;top:66.0px;width:13.9px;height:14.2px;background:#4b3123"></div>
<div class="a" style="left:668.8px;top:66.0px;width:13.9px;height:14.2px;background:#fcf8e8"></div>
<div class="a" style="left:683.8px;top:66.0px;width:13.9px;height:14.2px;background:#7a4e35"></div>
<div class="a" style="left:698.8px;top:66.0px;width:13.9px;height:14.2px;background:#e25e1d"></div>
<div class="a" style="left:578.8px;top:81.0px;width:13.9px;height:14.2px;background:#d8d5c6"></div>
<div class="a" style="left:593.8px;top:81.0px;width:13.9px;height:14.2px;background:#26a3df"></div>
<div class="a" style="left:608.8px;top:81.0px;width:13.9px;height:14.2px;background:#1e8abf"></div>
<div class="a" style="left:623.8px;top:81.0px;width:13.9px;height:14.2px;background:#4a0306"></div>
<div class="a" style="left:638.8px;top:81.0px;width:13.9px;height:14.2px;background:#20c12b"></div>
<div class="a" style="left:653.8px;top:81.0px;width:13.9px;height:14.2px;background:#7ec5f4"></div>
<div class="a" style="left:668.8px;top:81.0px;width:13.9px;height:14.2px;background:#58e174"></div>
<div class="a" style="left:713px;top:23px;width:15px;height:74px;background:#444"></div>
<div class="a" style="left:722px;top:23px;width:6px;height:74px;background:#3a3a3a"></div>
<svg class="a" style="left:723px;top:27.5px" width="5" height="5" viewBox="0 0 5 5"><path d="M0.5 4L5 0V4Z" fill="#e6e6e6"/></svg>
<div class="a" style="left:723px;top:69px;width:5px;height:12px;background:#8a8a8a;border-radius:2px 0 0 2px"></div>
<svg class="a" style="left:723px;top:88px" width="5" height="5" viewBox="0 0 5 5"><path d="M0.5 1L5 5V1Z" fill="#e6e6e6"/></svg>
<div class="a" style="left:579px;top:96.5px;width:149px;height:12.5px;background:#494949;border-top:1px solid #3a3a3a"></div>
<svg class="a" style="left:682px;top:98px" width="10" height="10" viewBox="0 0 10 10"><rect x="2.5" y="0.5" width="7" height="8" fill="#e8e8e8"/><path d="M0.5 2.5H2.5V5H0.5Z" fill="#e8e8e8"/><path d="M0.5 5.5H4.5V9.5" fill="none" stroke="#444" stroke-width="1"/></svg>
<svg class="a" style="left:703px;top:98px" width="10" height="10" viewBox="0 0 10 10"><path d="M3.5 2V0.8H6.5V2" fill="none" stroke="#8a8a8a"/><rect x="0.5" y="2" width="9" height="1.6" fill="#8a8a8a"/><rect x="1.5" y="4" width="7" height="5.5" fill="#7c7c7c"/><path d="M3.5 5V8.5M6.5 5V8.5" stroke="#5a5a5a" stroke-width="0.8"/></svg>
<div class="a" style="left:579px;top:109px;width:149px;height:6px;background:#3f3f3f"></div>
<div class="a" style="left:649px;top:111px;width:16px;height:2px;background:repeating-linear-gradient(90deg,#666 0 1px,transparent 1px 2px)"></div>
<div class="a" style="left:596.5px;top:523.3px;width:140px;height:30px;background:#f3ead5;border-radius:7px 0 0 0"></div>
<svg class="a" style="left:596px;top:522px" width="24" height="24" viewBox="0 0 24 24">
<path d="M4.9 12.6H11.8V19" fill="none" stroke="#0f5b66" stroke-width="4.3" stroke-linecap="round" stroke-linejoin="round"/>
<path d="M11.8 4.6V12.6H19" fill="none" stroke="#3ab4bc" stroke-width="4.3" stroke-linecap="round" stroke-linejoin="round"/>
<path d="M15.6 6.8C15.3 4.5 17 2.2 20.4 1.4C20.6 4 19 6.3 15.6 6.8Z" fill="#236b2c"/>
<path d="M18.6 8.4C19.6 7.2 21.2 7 22 7.6C21.2 8.8 19.6 9 18.6 8.4Z" fill="#236b2c"/>
</svg>
<div class="t" style="left:620.4px;top:525.9px;font-size:16px;line-height:16px;font-weight:bold;color:#3b3a37">Healthy</div>
<div class="t" style="left:683.3px;top:525.9px;font-size:16px;line-height:16px;color:#474541">Living</div>

</body></html>
